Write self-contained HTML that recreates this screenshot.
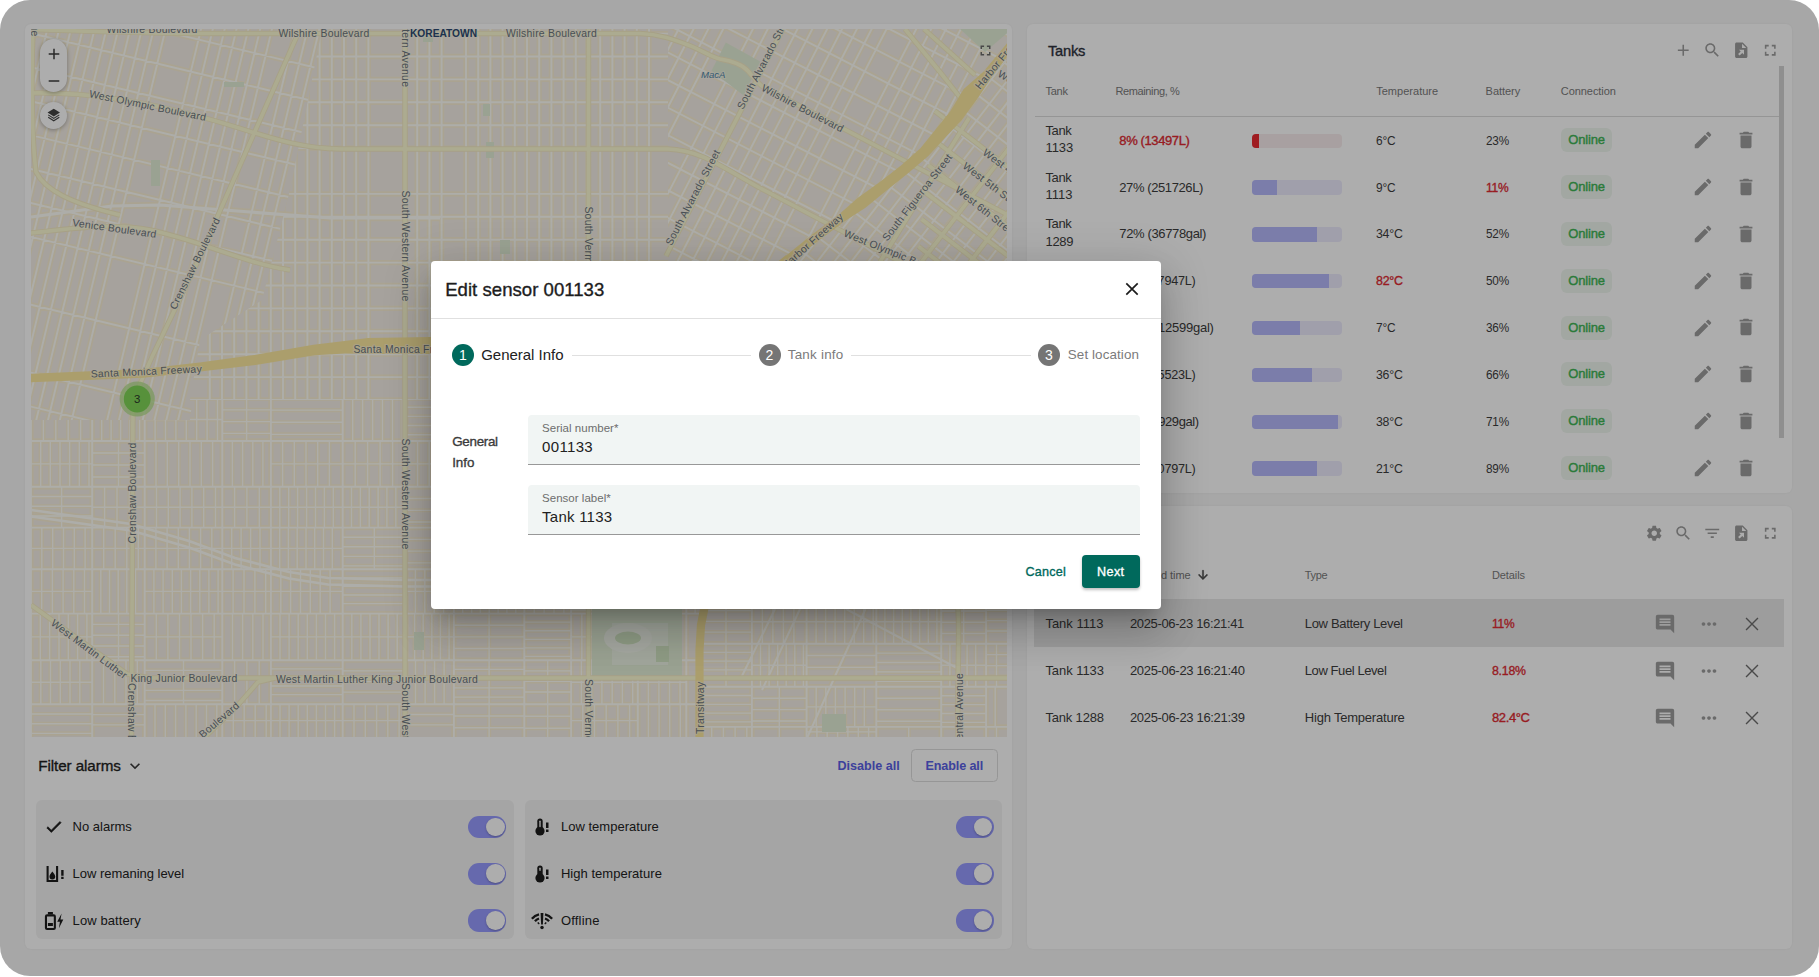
<!DOCTYPE html>
<html lang="en">
<head>
<meta charset="utf-8">
<title>Fuel level monitoring</title>
<style>

* { box-sizing: border-box; }
html, body { margin: 0; padding: 0; }
body {
  width: 1819px; height: 977px; overflow: hidden; background: #fff;
  font-family: "Liberation Sans", sans-serif; font-size: 13px; color: #212121;
  position: relative;
}
#frame {
  position: absolute; left: 0; top: 0; width: 1819px; height: 976px;
  border-radius: 30px; background: #f7f7f7; overflow: hidden;
}
.card {
  position: absolute; background: #fff; border-radius: 6px;
  box-shadow: 0 0 3px rgba(0,0,0,0.06);
}
#leftcard { position: absolute; left: 24.5px; top: 24px; width: 987.6px; height: 925px;
  background: #fff; border-radius: 6px; box-shadow: 0 0 3px rgba(0,0,0,0.06); }
#map { position: absolute; left: 6.5px; top: 5px; width: 976px; height: 708px; overflow: hidden; background: #f7ede1; }
#map svg { display: block; }
#backdrop { position: absolute; left: 0; top: 0; width: 1819px; height: 976px; background: rgba(0,0,0,0.32); }

.abs { position: absolute; white-space: nowrap; }
.med { -webkit-text-stroke: 0.35px currentColor; }
svg.ic { position: absolute; display: block; }

/* map controls */
.zoompill { position: absolute; left: 9px; top: 9.5px; width: 26.5px; height: 53.5px; border-radius: 14px; background: #fff;
  box-shadow: 0 1px 4px rgba(0,0,0,0.3); }
.layersbtn { position: absolute; left: 9px; top: 72.5px; width: 27px; height: 27px; border-radius: 50%; background: #fff;
  box-shadow: 0 1px 4px rgba(0,0,0,0.3); }

/* filter panel */
.fbox { position: absolute; top: 776px; height: 139px; background: #f4f4f4; border-radius: 6px; }
.frow { position: absolute; left: 0; right: 0; height: 46.8px; }
.frow .lbl { position: absolute; left: 36.3px; top: 50%; margin-top: -1px; transform: translateY(-50%); font-size: 13px; color: #222; white-space: nowrap; }
.toggle { position: absolute; right: 7.6px; top: 50%; margin-top: -11.1px; width: 38.2px; height: 22.2px; border-radius: 11.1px; background: #979bff; }
.toggle i { position: absolute; right: 1.8px; top: 1.8px; width: 18.6px; height: 18.6px; border-radius: 50%; background: #fff; box-shadow: 0 1px 2px rgba(0,0,0,0.25); }

/* tables */
.th { position: absolute; font-size: 11px; color: #7a7a7a; white-space: nowrap; }
.td { position: absolute; font-size: 13px; color: #3d3d3d; white-space: nowrap; transform: translateY(-50%); margin-top: -0.5px; }
.red { color: #e02a32 !important; }
.bar { position: absolute; width: 90px; height: 14.4px; border-radius: 4px; overflow: hidden; background: #ecebfd; }
.bar i { position: absolute; left: 0; top: 0; bottom: 0; background: #b5b8fb; }
.bar.r { background: #f8eced; }
.bar.r i { background: #ea2a31; }
.badge { position: absolute; width: 50.8px; height: 24px; border-radius: 6px; background: #eff7ef; color: #3fb556; font-size: 13px; -webkit-text-stroke: 0.4px currentColor;
  text-align: center; line-height: 24px; }

/* modal */
#modal { position: absolute; left: 430.5px; top: 260.5px; width: 730.7px; height: 348.9px; background: #fff; border-radius: 4px;
  box-shadow: 0 11px 15px -7px rgba(0,0,0,0.2), 0 24px 38px 3px rgba(0,0,0,0.14), 0 9px 46px 8px rgba(0,0,0,0.12); }
.field { position: absolute; left: 97.5px; width: 611.5px; height: 49.6px; background: #f1f5f4; border-radius: 4px 4px 0 0; border-bottom: 1.2px solid #989898; }
.field .fl { position: absolute; left: 14px; top: 7px; font-size: 11.5px; color: #6d6d6d; white-space: nowrap; letter-spacing: 0.1px; }
.field .fv { position: absolute; left: 14px; top: 23px; font-size: 15px; color: #212121; white-space: nowrap; }
.stepc { position: absolute; width: 22px; height: 22px; border-radius: 50%; color: #fff; font-size: 14px; text-align: center; line-height: 22px; }
.stepl { position: absolute; height: 1px; background: #e0e0e0; }

</style>
</head>
<body>
<div id="frame">
  <div id="leftcard">
    <div id="map">
<svg width="976" height="708" viewBox="31 29 976 708" font-family="Liberation Sans, sans-serif">
<defs>
<clipPath id="cA"><path d="M31 29H322L306 110L290 190L262 300L200 340L190 420L31 420Z"/></clipPath>
<clipPath id="cB"><path d="M322 29H668V400H190L200 340L262 300L290 190L306 110Z"/></clipPath>
<clipPath id="cC"><path d="M31 420H190V400H700V737H31Z"/></clipPath>
<clipPath id="cD"><path d="M668 29H1007V60L962 103L929 142L865 197L824 225L760 290H668Z"/></clipPath>
<clipPath id="cE"><path d="M1007 60L962 103L929 142L865 197L824 225L760 290H1007Z"/></clipPath>
<clipPath id="cF"><path d="M700 345H1007V737H700Z"/></clipPath>
</defs>
<rect x="31" y="29" width="976" height="708" fill="#f5efe7"/>
<defs>
<path id="gcA" clip-path="url(#cA)" d="M-340.6 511.7L-144.5 -305M-329.4 514.4L-133.3 -302.4M-318.2 517.1L-122.1 -299.7M-307.1 519.8L-111 -297M-295.9 522.5L-99.8 -294.3M-284.7 525.2L-88.6 -291.6M-273.5 527.9L-77.4 -288.9M-262.3 530.5L-66.2 -286.2M-240 535.9L-43.9 -280.9M-228.8 538.6L-32.7 -278.2M-217.6 541.3L-21.5 -275.5M-206.4 544L-10.3 -272.8M-184.1 549.3L12 -267.5M-172.9 552L23.2 -264.8M-161.7 554.7L34.4 -262.1M-150.5 557.4L45.6 -259.4M-139.3 560.1L56.8 -256.7M-128.1 562.8L67.9 -254M-117 565.4L79.1 -251.3M-105.8 568.1L90.3 -248.7M-94.6 570.8L101.5 -246M-83.4 573.5L112.7 -243.3M-72.2 576.2L123.9 -240.6M-61.1 578.9L135 -237.9M-49.9 581.5L146.2 -235.2M-38.7 584.2L157.4 -232.6M-27.5 586.9L168.6 -229.9M-16.3 589.6L179.8 -227.2M-5.1 592.3L191 -224.5M6 595L202.1 -221.8M17.2 597.7L213.3 -219.1M28.4 600.3L224.5 -216.4M62 608.4L258 -208.4M73.1 611.1L269.2 -205.7M84.3 613.8L280.4 -203M95.5 616.4L291.6 -200.3M106.7 619.1L302.8 -197.7M117.9 621.8L314 -195M129 624.5L325.1 -192.3M151.4 629.9L347.5 -186.9M162.6 632.6L358.7 -184.2M173.8 635.2L369.9 -181.5M185 637.9L381.1 -178.9M196.1 640.6L392.2 -176.2M207.3 643.3L403.4 -173.5M218.5 646L414.6 -170.8M229.7 648.7L425.8 -168.1M240.9 651.3L437 -165.4M252.1 654L448.1 -162.8M263.2 656.7L459.3 -160.1M274.4 659.4L470.5 -157.4M285.6 662.1L481.7 -154.7M296.8 664.8L492.9 -152M330.3 672.8L526.4 -144M341.5 675.5L537.6 -141.3M352.7 678.2L548.8 -138.6M363.9 680.9L560 -135.9M375.1 683.6L571.2 -133.2M386.2 686.2L582.3 -130.5M397.4 688.9L593.5 -127.9M408.6 691.6L604.7 -125.2M419.8 694.3L615.9 -122.5M431 697L627.1 -119.8M442.1 699.7L638.2 -117.1M453.3 702.4L649.4 -114.4M464.5 705L660.6 -111.7M475.7 707.7L671.8 -109.1M-348.5 519.1L468.2 715.2M-340.8 487L476 683.1M-325.4 422.8L491.4 618.9M-317.7 390.7L499.1 586.8M-310 358.7L506.8 554.8M-302.3 326.6L514.5 522.7M-294.6 294.5L522.2 490.6M-279.2 230.3L537.6 426.4M-263.8 166.1L553 362.2M-256.1 134L560.7 330.1M-248.4 102L568.4 298M-240.7 69.9L576.1 266M-233 37.8L583.8 233.9M-225.3 5.7L591.5 201.8M-217.6 -26.4L599.2 169.7M-209.9 -58.5L606.9 137.6M-202.2 -90.6L614.6 105.5M-194.5 -122.7L622.3 73.4M-186.8 -154.8L630 41.3M-179.1 -186.8L637.7 9.3M-171.4 -218.9L645.4 -22.8M-163.7 -251L653.1 -54.9M-156 -283.1L660.8 -87M-148.2 -315.2L668.5 -119.1"/>
<path id="gcB" clip-path="url(#cB)" d="M-22 476.5L-22 -363.5M-9.8 476.5L-9.8 -363.5M2.4 476.5L2.4 -363.5M14.6 476.5L14.6 -363.5M26.8 476.5L26.8 -363.5M51.2 476.5L51.2 -363.5M75.6 476.5L75.6 -363.5M87.8 476.5L87.8 -363.5M100 476.5L100 -363.5M112.2 476.5L112.2 -363.5M124.4 476.5L124.4 -363.5M136.6 476.5L136.6 -363.5M148.8 476.5L148.8 -363.5M161 476.5L161 -363.5M173.2 476.5L173.2 -363.5M185.4 476.5L185.4 -363.5M209.8 476.5L209.8 -363.5M222 476.5L222 -363.5M234.2 476.5L234.2 -363.5M246.4 476.5L246.4 -363.5M258.6 476.5L258.6 -363.5M270.8 476.5L270.8 -363.5M283 476.5L283 -363.5M295.2 476.5L295.2 -363.5M307.4 476.5L307.4 -363.5M319.6 476.5L319.6 -363.5M331.8 476.5L331.8 -363.5M344 476.5L344 -363.5M356.2 476.5L356.2 -363.5M368.4 476.5L368.4 -363.5M405 476.5L405 -363.5M417.2 476.5L417.2 -363.5M429.4 476.5L429.4 -363.5M441.6 476.5L441.6 -363.5M466 476.5L466 -363.5M478.2 476.5L478.2 -363.5M490.4 476.5L490.4 -363.5M502.6 476.5L502.6 -363.5M514.8 476.5L514.8 -363.5M527 476.5L527 -363.5M539.2 476.5L539.2 -363.5M551.4 476.5L551.4 -363.5M563.6 476.5L563.6 -363.5M575.8 476.5L575.8 -363.5M588 476.5L588 -363.5M600.2 476.5L600.2 -363.5M612.4 476.5L612.4 -363.5M624.6 476.5L624.6 -363.5M636.8 476.5L636.8 -363.5M649 476.5L649 -363.5M673.4 476.5L673.4 -363.5M685.6 476.5L685.6 -363.5M697.8 476.5L697.8 -363.5M710 476.5L710 -363.5M722.2 476.5L722.2 -363.5M734.4 476.5L734.4 -363.5M746.6 476.5L746.6 -363.5M758.8 476.5L758.8 -363.5M771 476.5L771 -363.5M783.2 476.5L783.2 -363.5M807.6 476.5L807.6 -363.5M819.8 476.5L819.8 -363.5M832 476.5L832 -363.5M-15 491.6L825 491.6M-15 468.7L825 468.7M-15 422.9L825 422.9M-15 400L825 400M-15 377.1L825 377.1M-15 354.2L825 354.2M-15 331.3L825 331.3M-15 308.4L825 308.4M-15 285.5L825 285.5M-15 262.6L825 262.6M-15 239.7L825 239.7M-15 216.8L825 216.8M-15 193.9L825 193.9M-15 148.1L825 148.1M-15 125.2L825 125.2M-15 102.3L825 102.3M-15 79.4L825 79.4M-15 56.5L825 56.5M-15 33.6L825 33.6M-15 10.7L825 10.7M-15 -35.1L825 -35.1M-15 -58L825 -58M-15 -80.9L825 -80.9M-15 -103.8L825 -103.8M-15 -126.7L825 -126.7M-15 -149.6L825 -149.6M-15 -172.5L825 -172.5M-15 -195.4L825 -195.4M-15 -218.3L825 -218.3M-15 -241.2L825 -241.2M-15 -264.1L825 -264.1M-15 -287L825 -287M-15 -309.9L825 -309.9M-15 -332.8L825 -332.8M-15 -355.7L825 -355.7M-15 -378.6L825 -378.6"/>
<path id="gcC" clip-path="url(#cC)" d="M31 398L31 737M92.2 398L92.2 737M144.7 398L144.7 737M222.3 398L222.3 737M270.9 398L270.9 737M342.7 398L342.7 737M406 398L406 737M453.9 398L453.9 737M524.3 398L524.3 737M571.1 398L571.1 737M637.8 398L637.8 737M686.3 398L686.3 737M735.8 398L735.8 737M31 398L700 398M31 441L700 441M31 486.8L700 486.8M31 527.6L700 527.6M31 569.2L700 569.2M31 613.6L700 613.6M31 660.2L700 660.2M31 704.3L700 704.3M31 747L700 747"/>
<path id="gcCi" clip-path="url(#cC)" d="M43.4 398L43.4 441M55.8 398L55.8 441M68.2 398L68.2 441M80.6 398L80.6 441M40.7 441L40.7 486.8M50.3 441L50.3 486.8M60 441L60 486.8M69.6 441L69.6 486.8M79.3 441L79.3 486.8M89 441L89 486.8M31 463.9L92.2 463.9M31 496.5L92.2 496.5M31 506.2L92.2 506.2M31 516L92.2 516M61.6 486.8L61.6 527.6M41.8 527.6L41.8 569.2M52.7 527.6L52.7 569.2M63.5 527.6L63.5 569.2M74.3 527.6L74.3 569.2M85.1 527.6L85.1 569.2M31 548.4L92.2 548.4M41.7 569.2L41.7 613.6M52.4 569.2L52.4 613.6M63.1 569.2L63.1 613.6M73.8 569.2L73.8 613.6M84.5 569.2L84.5 613.6M31 591.4L92.2 591.4M40.3 613.6L40.3 660.2M49.6 613.6L49.6 660.2M59 613.6L59 660.2M68.3 613.6L68.3 660.2M77.6 613.6L77.6 660.2M86.9 613.6L86.9 660.2M31 636.9L92.2 636.9M40.8 660.2L40.8 704.3M50.5 660.2L50.5 704.3M60.3 660.2L60.3 704.3M70 660.2L70 704.3M79.8 660.2L79.8 704.3M31 682.2L92.2 682.2M31 714L92.2 714M31 723.7L92.2 723.7M31 733.4L92.2 733.4M101.7 398L101.7 441M111.1 398L111.1 441M120.6 398L120.6 441M130.1 398L130.1 441M139.6 398L139.6 441M92.2 453L144.7 453M92.2 465L144.7 465M92.2 477L144.7 477M118.5 441L118.5 486.8M104.6 486.8L104.6 527.6M117 486.8L117 527.6M129.5 486.8L129.5 527.6M92.2 507.2L144.7 507.2M103.7 527.6L103.7 569.2M115.2 527.6L115.2 569.2M126.8 527.6L126.8 569.2M138.3 527.6L138.3 569.2M92.2 548.4L144.7 548.4M100.8 569.2L100.8 613.6M109.5 569.2L109.5 613.6M118.2 569.2L118.2 613.6M126.8 569.2L126.8 613.6M135.5 569.2L135.5 613.6M92.2 624.4L144.7 624.4M92.2 635.2L144.7 635.2M92.2 646L144.7 646M92.2 656.7L144.7 656.7M118.5 613.6L118.5 660.2M103.5 660.2L103.5 704.3M114.8 660.2L114.8 704.3M126 660.2L126 704.3M137.3 660.2L137.3 704.3M92.2 714.6L144.7 714.6M92.2 724.9L144.7 724.9M155.1 398L155.1 441M165.5 398L165.5 441M175.9 398L175.9 441M186.3 398L186.3 441M196.7 398L196.7 441M207.1 398L207.1 441M217.5 398L217.5 441M144.7 419.5L222.3 419.5M156 441L156 486.8M167.3 441L167.3 486.8M178.7 441L178.7 486.8M190 441L190 486.8M201.3 441L201.3 486.8M212.6 441L212.6 486.8M156.5 486.8L156.5 527.6M168.3 486.8L168.3 527.6M180.1 486.8L180.1 527.6M191.9 486.8L191.9 527.6M203.7 486.8L203.7 527.6M215.5 486.8L215.5 527.6M144.7 507.2L222.3 507.2M155.9 527.6L155.9 569.2M167.1 527.6L167.1 569.2M178.3 527.6L178.3 569.2M189.4 527.6L189.4 569.2M200.6 527.6L200.6 569.2M211.8 527.6L211.8 569.2M144.7 548.4L222.3 548.4M153.9 569.2L153.9 613.6M163.1 569.2L163.1 613.6M172.3 569.2L172.3 613.6M181.4 569.2L181.4 613.6M190.6 569.2L190.6 613.6M199.8 569.2L199.8 613.6M208.9 569.2L208.9 613.6M218.1 569.2L218.1 613.6M144.7 591.4L222.3 591.4M156.3 613.6L156.3 660.2M167.9 613.6L167.9 660.2M179.5 613.6L179.5 660.2M191 613.6L191 660.2M202.6 613.6L202.6 660.2M214.2 613.6L214.2 660.2M144.7 636.9L222.3 636.9M144.7 670.3L222.3 670.3M144.7 680.3L222.3 680.3M144.7 690.4L222.3 690.4M144.7 700.5L222.3 700.5M183.5 660.2L183.5 704.3M155 704.3L155 737M165.3 704.3L165.3 737M175.6 704.3L175.6 737M185.9 704.3L185.9 737M196.2 704.3L196.2 737M206.5 704.3L206.5 737M216.8 704.3L216.8 737M222.3 409.8L270.9 409.8M222.3 421.6L270.9 421.6M222.3 433.3L270.9 433.3M246.6 398L246.6 441M232.4 441L232.4 486.8M242.6 441L242.6 486.8M252.8 441L252.8 486.8M262.9 441L262.9 486.8M234.6 486.8L234.6 527.6M246.9 486.8L246.9 527.6M259.3 486.8L259.3 527.6M222.3 507.2L270.9 507.2M231.7 527.6L231.7 569.2M241.1 527.6L241.1 569.2M250.6 527.6L250.6 569.2M260 527.6L260 569.2M222.3 548.4L270.9 548.4M233.1 569.2L233.1 613.6M244 569.2L244 613.6M254.9 569.2L254.9 613.6M265.7 569.2L265.7 613.6M222.3 591.4L270.9 591.4M232.5 613.6L232.5 660.2M242.6 613.6L242.6 660.2M252.8 613.6L252.8 660.2M263 613.6L263 660.2M234.6 660.2L234.6 704.3M246.9 660.2L246.9 704.3M259.2 660.2L259.2 704.3M233.3 704.3L233.3 737M244.2 704.3L244.2 737M255.2 704.3L255.2 737M266.2 704.3L266.2 737M222.3 720.6L270.9 720.6M270.9 410.1L342.7 410.1M270.9 422.2L342.7 422.2M270.9 434.3L342.7 434.3M282.6 441L282.6 486.8M294.3 441L294.3 486.8M306 441L306 486.8M317.7 441L317.7 486.8M329.4 441L329.4 486.8M270.9 463.9L342.7 463.9M279.8 486.8L279.8 527.6M288.7 486.8L288.7 527.6M297.6 486.8L297.6 527.6M306.6 486.8L306.6 527.6M315.5 486.8L315.5 527.6M324.4 486.8L324.4 527.6M333.3 486.8L333.3 527.6M270.9 507.2L342.7 507.2M279.7 527.6L279.7 569.2M288.4 527.6L288.4 569.2M297.2 527.6L297.2 569.2M306 527.6L306 569.2M314.7 527.6L314.7 569.2M323.5 527.6L323.5 569.2M332.3 527.6L332.3 569.2M270.9 548.4L342.7 548.4M280.8 569.2L280.8 613.6M290.6 569.2L290.6 613.6M300.5 569.2L300.5 613.6M310.3 569.2L310.3 613.6M320.2 569.2L320.2 613.6M330.1 569.2L330.1 613.6M270.9 591.4L342.7 591.4M280 613.6L280 660.2M289.1 613.6L289.1 660.2M298.2 613.6L298.2 660.2M307.3 613.6L307.3 660.2M316.4 613.6L316.4 660.2M325.5 613.6L325.5 660.2M334.6 613.6L334.6 660.2M270.9 636.9L342.7 636.9M270.9 668.8L342.7 668.8M270.9 677.4L342.7 677.4M270.9 686L342.7 686M270.9 694.6L342.7 694.6M280 704.3L280 737M289.1 704.3L289.1 737M298.2 704.3L298.2 737M307.3 704.3L307.3 737M316.4 704.3L316.4 737M325.5 704.3L325.5 737M334.6 704.3L334.6 737M270.9 720.6L342.7 720.6M352.7 398L352.7 441M362.6 398L362.6 441M372.6 398L372.6 441M382.5 398L382.5 441M392.5 398L392.5 441M402.4 398L402.4 441M355.2 441L355.2 486.8M367.6 441L367.6 486.8M380.1 441L380.1 486.8M392.6 441L392.6 486.8M342.7 463.9L406 463.9M351.5 486.8L351.5 527.6M360.4 486.8L360.4 527.6M369.2 486.8L369.2 527.6M378.1 486.8L378.1 527.6M386.9 486.8L386.9 527.6M395.8 486.8L395.8 527.6M342.7 507.2L406 507.2M342.7 537.2L406 537.2M342.7 546.7L406 546.7M342.7 556.3L406 556.3M342.7 565.9L406 565.9M374.3 527.6L374.3 569.2M342.7 577.8L406 577.8M342.7 586.4L406 586.4M342.7 595L406 595M342.7 603.6L406 603.6M351.8 613.6L351.8 660.2M360.9 613.6L360.9 660.2M370 613.6L370 660.2M379 613.6L379 660.2M388.1 613.6L388.1 660.2M397.2 613.6L397.2 660.2M342.7 636.9L406 636.9M342.7 670.8L406 670.8M342.7 681.4L406 681.4M342.7 692.1L406 692.1M354 704.3L354 737M365.3 704.3L365.3 737M376.6 704.3L376.6 737M387.8 704.3L387.8 737M399.1 704.3L399.1 737M342.7 720.6L406 720.6M406 407.2L453.9 407.2M406 416.3L453.9 416.3M406 425.5L453.9 425.5M406 434.7L453.9 434.7M417.6 441L417.6 486.8M429.2 441L429.2 486.8M440.8 441L440.8 486.8M406 463.9L453.9 463.9M406 498.5L453.9 498.5M406 510.3L453.9 510.3M406 522L453.9 522M406 539.4L453.9 539.4M406 551.1L453.9 551.1M406 562.8L453.9 562.8M415.4 569.2L415.4 613.6M424.8 569.2L424.8 613.6M434.2 569.2L434.2 613.6M443.6 569.2L443.6 613.6M406 591.4L453.9 591.4M414.6 613.6L414.6 660.2M423.2 613.6L423.2 660.2M431.8 613.6L431.8 660.2M440.4 613.6L440.4 660.2M449.1 613.6L449.1 660.2M406 636.9L453.9 636.9M415.5 660.2L415.5 704.3M425.1 660.2L425.1 704.3M434.6 660.2L434.6 704.3M444.1 660.2L444.1 704.3M406 714.5L453.9 714.5M406 724.8L453.9 724.8M466.2 398L466.2 441M478.5 398L478.5 441M490.8 398L490.8 441M503.2 398L503.2 441M515.5 398L515.5 441M453.9 419.5L524.3 419.5M463.3 441L463.3 486.8M472.7 441L472.7 486.8M482.1 441L482.1 486.8M491.5 441L491.5 486.8M500.9 441L500.9 486.8M510.3 441L510.3 486.8M519.7 441L519.7 486.8M453.9 463.9L524.3 463.9M453.9 497.8L524.3 497.8M453.9 508.8L524.3 508.8M453.9 519.7L524.3 519.7M464.3 527.6L464.3 569.2M474.7 527.6L474.7 569.2M485.1 527.6L485.1 569.2M495.6 527.6L495.6 569.2M506 527.6L506 569.2M516.4 527.6L516.4 569.2M462.7 569.2L462.7 613.6M471.6 569.2L471.6 613.6M480.4 569.2L480.4 613.6M489.2 569.2L489.2 613.6M498.1 569.2L498.1 613.6M506.9 569.2L506.9 613.6M515.8 569.2L515.8 613.6M453.9 625.2L524.3 625.2M453.9 636.8L524.3 636.8M453.9 648.5L524.3 648.5M489.1 613.6L489.1 660.2M453.9 669.4L524.3 669.4M453.9 678.6L524.3 678.6M453.9 687.9L524.3 687.9M453.9 697.1L524.3 697.1M489.1 660.2L489.1 704.3M453.9 716L524.3 716M453.9 727.7L524.3 727.7M489.1 704.3L489.1 737M524.3 408.1L571.1 408.1M524.3 418.2L571.1 418.2M524.3 428.3L571.1 428.3M533.4 441L533.4 486.8M542.6 441L542.6 486.8M551.8 441L551.8 486.8M561 441L561 486.8M524.3 463.9L571.1 463.9M524.3 498.9L571.1 498.9M524.3 511L571.1 511M524.3 523.1L571.1 523.1M547.7 486.8L547.7 527.6M524.3 539.4L571.1 539.4M524.3 551.2L571.1 551.2M524.3 563L571.1 563M534.2 569.2L534.2 613.6M544.1 569.2L544.1 613.6M554 569.2L554 613.6M563.9 569.2L563.9 613.6M524.3 591.4L571.1 591.4M524.3 622.1L571.1 622.1M524.3 630.7L571.1 630.7M524.3 639.3L571.1 639.3M524.3 647.8L571.1 647.8M524.3 656.4L571.1 656.4M524.3 670.8L571.1 670.8M524.3 681.4L571.1 681.4M524.3 692L571.1 692M547.7 660.2L547.7 704.3M524.3 716.2L571.1 716.2M524.3 728.2L571.1 728.2M547.7 704.3L547.7 737M580.6 398L580.6 441M590.1 398L590.1 441M599.6 398L599.6 441M609.2 398L609.2 441M618.7 398L618.7 441M628.2 398L628.2 441M571.1 419.5L637.8 419.5M582 441L582 486.8M592.8 441L592.8 486.8M603.7 441L603.7 486.8M614.5 441L614.5 486.8M625.4 441L625.4 486.8M571.1 463.9L637.8 463.9M571.1 495.8L637.8 495.8M571.1 504.8L637.8 504.8M571.1 513.8L637.8 513.8M571.1 522.9L637.8 522.9M604.5 486.8L604.5 527.6M581.5 527.6L581.5 569.2M591.8 527.6L591.8 569.2M602.1 527.6L602.1 569.2M612.5 527.6L612.5 569.2M622.8 527.6L622.8 569.2M633.1 527.6L633.1 569.2M571.1 579.4L637.8 579.4M571.1 589.6L637.8 589.6M571.1 599.7L637.8 599.7M571.1 609.9L637.8 609.9M581.8 613.6L581.8 660.2M592.4 613.6L592.4 660.2M603 613.6L603 660.2M613.6 613.6L613.6 660.2M624.3 613.6L624.3 660.2M571.1 636.9L637.8 636.9M581.4 660.2L581.4 704.3M591.6 660.2L591.6 704.3M601.9 660.2L601.9 704.3M612.2 660.2L612.2 704.3M622.4 660.2L622.4 704.3M632.7 660.2L632.7 704.3M571.1 682.2L637.8 682.2M582.8 704.3L582.8 737M594.5 704.3L594.5 737M606.2 704.3L606.2 737M617.9 704.3L617.9 737M629.6 704.3L629.6 737M571.1 720.6L637.8 720.6M649.2 398L649.2 441M660.6 398L660.6 441M672 398L672 441M637.8 419.5L686.3 419.5M648.4 441L648.4 486.8M659 441L659 486.8M669.5 441L669.5 486.8M680.1 441L680.1 486.8M646.7 486.8L646.7 527.6M655.7 486.8L655.7 527.6M664.6 486.8L664.6 527.6M673.5 486.8L673.5 527.6M682.4 486.8L682.4 527.6M637.8 507.2L686.3 507.2M637.8 537.2L686.3 537.2M637.8 546.8L686.3 546.8M637.8 556.4L686.3 556.4M637.8 566.1L686.3 566.1M637.8 579.9L686.3 579.9M637.8 590.7L686.3 590.7M637.8 601.4L686.3 601.4M648.1 613.6L648.1 660.2M658.4 613.6L658.4 660.2M668.6 613.6L668.6 660.2M678.9 613.6L678.9 660.2M648.4 660.2L648.4 704.3M658.9 660.2L658.9 704.3M669.5 660.2L669.5 704.3M680 660.2L680 704.3M637.8 682.2L686.3 682.2M648.4 704.3L648.4 737M659.1 704.3L659.1 737M669.7 704.3L669.7 737M680.3 704.3L680.3 737M686.3 409.3L700 409.3M686.3 420.6L700 420.6M686.3 431.9L700 431.9M695.8 441L695.8 486.8M686.3 507.2L700 507.2M696.6 527.6L696.6 569.2M686.3 548.4L700 548.4M695.1 569.2L695.1 613.6"/>
<path id="gcD" clip-path="url(#cD)" d="M214.6 208.5L599.9 -538M226.3 214.5L611.6 -531.9M238.1 220.6L623.3 -525.8M249.8 226.6L635.1 -519.8M261.5 232.7L646.8 -513.7M273.3 238.8L658.5 -507.7M285 244.8L670.3 -501.6M296.7 250.9L682 -495.6M308.5 256.9L693.7 -489.5M320.2 263L705.4 -483.5M331.9 269L717.2 -477.4M367.1 287.2L752.4 -459.2M378.8 293.2L764.1 -453.2M390.6 299.3L775.8 -447.1M402.3 305.4L787.6 -441.1M414 311.4L799.3 -435M425.8 317.5L811 -429M437.5 323.5L822.7 -422.9M449.2 329.6L834.5 -416.9M460.9 335.6L846.2 -410.8M472.7 341.7L857.9 -404.8M496.1 353.8L881.4 -392.7M507.9 359.8L893.1 -386.6M519.6 365.9L904.9 -380.5M531.3 371.9L916.6 -374.5M543 378L928.3 -368.4M566.5 390.1L951.8 -356.3M578.2 396.2L963.5 -350.3M590 402.2L975.2 -344.2M601.7 408.3L987 -338.2M613.4 414.3L998.7 -332.1M625.2 420.4L1010.4 -326.1M636.9 426.4L1022.2 -320M648.6 432.5L1033.9 -313.9M660.3 438.5L1045.6 -307.9M672.1 444.6L1057.3 -301.8M695.5 456.7L1080.8 -289.7M707.3 462.8L1092.5 -283.7M719 468.8L1104.3 -277.6M730.7 474.9L1116 -271.6M742.5 480.9L1127.7 -265.5M754.2 487L1139.4 -259.5M777.6 499.1L1162.9 -247.4M789.4 505.1L1174.6 -241.3M801.1 511.2L1186.4 -235.2M848 535.4L1233.3 -211M859.8 541.5L1245 -205M871.5 547.5L1256.7 -198.9M883.2 553.6L1268.5 -192.9M894.9 559.6L1280.2 -186.8M906.7 565.7L1291.9 -180.8M918.4 571.7L1303.7 -174.7M930.1 577.8L1315.4 -168.6M941.9 583.8L1327.1 -162.6M953.6 589.9L1338.9 -156.5M965.3 596L1350.6 -150.5M207.1 228.2L953.6 613.5M229.6 184.7L976 570M240.8 162.9L987.3 548.2M252.1 141.2L998.5 526.4M263.3 119.4L1009.7 504.7M285.8 75.8L1032.2 461.1M297 54.1L1043.5 439.3M308.2 32.3L1054.7 417.6M319.5 10.5L1065.9 395.8M330.7 -11.2L1077.2 374M342 -33L1088.4 352.3M353.2 -54.8L1099.6 330.5M364.4 -76.5L1110.9 308.7M375.7 -98.3L1122.1 286.9M386.9 -120.1L1133.3 265.2M398.1 -141.9L1144.6 243.4M409.4 -163.6L1155.8 221.6M420.6 -185.4L1167.1 199.9M431.9 -207.2L1178.3 178.1M443.1 -228.9L1189.5 156.3M454.3 -250.7L1200.8 134.5M465.6 -272.5L1212 112.8M476.8 -294.3L1223.2 91M488 -316L1234.5 69.2M510.5 -359.6L1257 25.7M521.7 -381.3L1268.2 3.9M533 -403.1L1279.4 -17.8M566.7 -468.4L1313.1 -83.2M577.9 -490.2L1324.4 -104.9M589.2 -512L1335.6 -126.7M600.4 -533.7L1346.8 -148.5M611.6 -555.5L1358.1 -170.2"/>
<path id="gcE" clip-path="url(#cE)" d="M522 203L887.3 -273M532.7 211.2L898 -264.8M543.5 219.4L908.7 -256.6M554.2 227.6L919.4 -248.4M564.9 235.9L930.1 -240.2M575.6 244.1L940.8 -231.9M586.3 252.3L951.6 -223.7M597 260.5L962.3 -215.5M607.7 268.7L973 -207.3M618.4 277L983.7 -199.1M629.1 285.2L994.4 -190.8M639.8 293.4L1005.1 -182.6M650.6 301.6L1015.8 -174.4M661.3 309.8L1026.5 -166.2M672 318L1037.2 -158M682.7 326.3L1047.9 -149.8M693.4 334.5L1058.7 -141.5M704.1 342.7L1069.4 -133.3M714.8 350.9L1080.1 -125.1M725.5 359.1L1090.8 -116.9M736.2 367.4L1101.5 -108.7M747 375.6L1112.2 -100.4M757.7 383.8L1122.9 -92.2M768.4 392L1133.6 -84M779.1 400.2L1144.3 -75.8M789.8 408.4L1155 -67.6M800.5 416.7L1165.8 -59.4M811.2 424.9L1176.5 -51.1M821.9 433.1L1187.2 -42.9M832.6 441.3L1197.9 -34.7M843.3 449.5L1208.6 -26.5M854.1 457.8L1219.3 -18.3M864.8 466L1230 -10M875.5 474.2L1240.7 -1.8M886.2 482.4L1251.4 6.4M896.9 490.6L1262.2 14.6M907.6 498.8L1272.9 22.8M918.3 507.1L1283.6 31M939.7 523.5L1305 47.5M950.4 531.7L1315.7 55.7M961.2 539.9L1326.4 63.9M971.9 548.2L1337.1 72.1M982.6 556.4L1347.8 80.4M993.3 564.6L1358.5 88.6M1004 572.8L1369.3 96.8M1014.7 581L1380 105M521.2 221.3L997.2 586.5M534 204.6L1010 569.9M546.8 188L1022.8 553.2M559.6 171.3L1035.6 536.6M572.4 154.6L1048.4 519.9M585.2 138L1061.2 503.2M597.9 121.3L1074 486.6M610.7 104.7L1086.7 469.9M623.5 88L1099.5 453.3M636.3 71.3L1112.3 436.6M649.1 54.7L1125.1 419.9M661.9 38L1137.9 403.3M674.6 21.4L1150.7 386.6M687.4 4.7L1163.4 369.9M700.2 -12L1176.2 353.3M725.8 -45.3L1201.8 320M738.6 -61.9L1214.6 303.3M751.3 -78.6L1227.4 286.6M764.1 -95.3L1240.1 270M776.9 -111.9L1252.9 253.3M789.7 -128.6L1265.7 236.7M802.5 -145.3L1278.5 220M815.3 -161.9L1291.3 203.3M828 -178.6L1304.1 186.7M840.8 -195.2L1316.8 170M853.6 -211.9L1329.6 153.4M866.4 -228.6L1342.4 136.7M879.2 -245.2L1355.2 120M892 -261.9L1368 103.4M904.8 -278.5L1380.8 86.7"/>
<path id="gcF" clip-path="url(#cF)" d="M700 345L700 737M751.9 345L751.9 737M806.6 345L806.6 737M876.3 345L876.3 737M941.2 345L941.2 737M986.1 345L986.1 737M1039 345L1039 737M700 345L1007 345M700 388.6L1007 388.6M700 431L1007 431M700 472.4L1007 472.4M700 514.6L1007 514.6M700 559.6L1007 559.6M700 599.8L1007 599.8M700 643.7L1007 643.7M700 686.7L1007 686.7M700 726.9L1007 726.9M700 769.2L1007 769.2"/>
<path id="gcFi" clip-path="url(#cF)" d="M700 356L751.9 356M700 367L751.9 367M700 378L751.9 378M726 345L726 388.6M700 401L751.9 401M700 413.5L751.9 413.5M700 425.9L751.9 425.9M708.9 431L708.9 472.4M717.8 431L717.8 472.4M726.8 431L726.8 472.4M735.7 431L735.7 472.4M744.6 431L744.6 472.4M700 451.7L751.9 451.7M711.6 472.4L711.6 514.6M723.2 472.4L723.2 514.6M734.8 472.4L734.8 514.6M746.5 472.4L746.5 514.6M700 493.5L751.9 493.5M700 524.8L751.9 524.8M700 535L751.9 535M700 545.1L751.9 545.1M700 555.3L751.9 555.3M709.5 559.6L709.5 599.8M719.1 559.6L719.1 599.8M728.6 559.6L728.6 599.8M738.1 559.6L738.1 599.8M747.7 559.6L747.7 599.8M700 610.6L751.9 610.6M700 621.3L751.9 621.3M700 632.1L751.9 632.1M726 599.8L726 643.7M700 652.4L751.9 652.4M700 661.1L751.9 661.1M700 669.8L751.9 669.8M700 678.6L751.9 678.6M726 643.7L726 686.7M700 695.5L751.9 695.5M700 704.3L751.9 704.3M700 713.1L751.9 713.1M700 721.9L751.9 721.9M711.7 726.9L711.7 737M723.4 726.9L723.4 737M735.1 726.9L735.1 737M746.8 726.9L746.8 737M751.9 353.8L806.6 353.8M751.9 362.5L806.6 362.5M751.9 371.3L806.6 371.3M751.9 380.1L806.6 380.1M779.3 345L779.3 388.6M751.9 398.5L806.6 398.5M751.9 408.3L806.6 408.3M751.9 418.2L806.6 418.2M761.5 431L761.5 472.4M771.1 431L771.1 472.4M780.7 431L780.7 472.4M790.2 431L790.2 472.4M799.8 431L799.8 472.4M761.4 472.4L761.4 514.6M770.9 472.4L770.9 514.6M780.3 472.4L780.3 514.6M789.8 472.4L789.8 514.6M799.2 472.4L799.2 514.6M751.9 493.5L806.6 493.5M760.6 514.6L760.6 559.6M769.4 514.6L769.4 559.6M778.1 514.6L778.1 559.6M786.8 514.6L786.8 559.6M795.5 514.6L795.5 559.6M751.9 537.1L806.6 537.1M751.9 569.4L806.6 569.4M751.9 579.1L806.6 579.1M751.9 588.8L806.6 588.8M779.3 559.6L779.3 599.8M762.4 599.8L762.4 643.7M772.9 599.8L772.9 643.7M783.4 599.8L783.4 643.7M793.9 599.8L793.9 643.7M751.9 621.7L806.6 621.7M760.5 643.7L760.5 686.7M769.1 643.7L769.1 686.7M777.7 643.7L777.7 686.7M786.2 643.7L786.2 686.7M794.8 643.7L794.8 686.7M803.4 643.7L803.4 686.7M751.9 665.2L806.6 665.2M751.9 698.2L806.6 698.2M751.9 709.6L806.6 709.6M751.9 721L806.6 721M779.3 686.7L779.3 726.9M779.3 726.9L779.3 737M806.6 356.8L876.3 356.8M806.6 368.6L876.3 368.6M806.6 380.3L876.3 380.3M841.4 345L841.4 388.6M806.6 400.4L876.3 400.4M806.6 412.3L876.3 412.3M806.6 424.1L876.3 424.1M806.6 442.2L876.3 442.2M806.6 453.5L876.3 453.5M806.6 464.7L876.3 464.7M841.4 431L841.4 472.4M806.6 484.2L876.3 484.2M806.6 496L876.3 496M806.6 507.8L876.3 507.8M816.7 514.6L816.7 559.6M826.8 514.6L826.8 559.6M836.9 514.6L836.9 559.6M847 514.6L847 559.6M857.2 514.6L857.2 559.6M867.3 514.6L867.3 559.6M806.6 537.1L876.3 537.1M815.6 559.6L815.6 599.8M824.6 559.6L824.6 599.8M833.6 559.6L833.6 599.8M842.6 559.6L842.6 599.8M851.7 559.6L851.7 599.8M860.7 559.6L860.7 599.8M869.7 559.6L869.7 599.8M816.1 599.8L816.1 643.7M825.6 599.8L825.6 643.7M835.1 599.8L835.1 643.7M844.7 599.8L844.7 643.7M854.2 599.8L854.2 643.7M863.7 599.8L863.7 643.7M873.2 599.8L873.2 643.7M806.6 621.7L876.3 621.7M806.6 655.5L876.3 655.5M806.6 667.4L876.3 667.4M806.6 679.2L876.3 679.2M816.2 686.7L816.2 726.9M825.8 686.7L825.8 726.9M835.4 686.7L835.4 726.9M845.1 686.7L845.1 726.9M854.7 686.7L854.7 726.9M864.3 686.7L864.3 726.9M806.6 706.8L876.3 706.8M816.9 726.9L816.9 737M827.2 726.9L827.2 737M837.6 726.9L837.6 737M847.9 726.9L847.9 737M858.3 726.9L858.3 737M868.6 726.9L868.6 737M806.6 731.9L876.3 731.9M876.3 354.6L941.2 354.6M876.3 364.1L941.2 364.1M876.3 373.7L941.2 373.7M876.3 383.2L941.2 383.2M886.9 388.6L886.9 431M897.6 388.6L897.6 431M908.3 388.6L908.3 431M919 388.6L919 431M929.7 388.6L929.7 431M876.3 440.7L941.2 440.7M876.3 450.5L941.2 450.5M876.3 460.2L941.2 460.2M908.7 431L908.7 472.4M876.3 482.4L941.2 482.4M876.3 492.4L941.2 492.4M876.3 502.4L941.2 502.4M876.3 523.9L941.2 523.9M876.3 533.2L941.2 533.2M876.3 542.5L941.2 542.5M876.3 551.8L941.2 551.8M908.7 514.6L908.7 559.6M885.8 559.6L885.8 599.8M895.4 559.6L895.4 599.8M904.9 559.6L904.9 599.8M914.5 559.6L914.5 599.8M924 559.6L924 599.8M933.6 559.6L933.6 599.8M876.3 579.7L941.2 579.7M884.9 599.8L884.9 643.7M893.6 599.8L893.6 643.7M902.3 599.8L902.3 643.7M910.9 599.8L910.9 643.7M919.6 599.8L919.6 643.7M928.3 599.8L928.3 643.7M936.9 599.8L936.9 643.7M876.3 621.7L941.2 621.7M876.3 653.1L941.2 653.1M876.3 662.5L941.2 662.5M876.3 671.9L941.2 671.9M876.3 681.4L941.2 681.4M876.3 698.2L941.2 698.2M876.3 709.7L941.2 709.7M876.3 721.2L941.2 721.2M908.7 726.9L908.7 737M953.7 345L953.7 388.6M966.1 345L966.1 388.6M978.6 345L978.6 388.6M952.3 388.6L952.3 431M963.4 388.6L963.4 431M974.5 388.6L974.5 431M941.2 443.1L986.1 443.1M941.2 455.1L986.1 455.1M941.2 467.2L986.1 467.2M953 472.4L953 514.6M964.7 472.4L964.7 514.6M976.5 472.4L976.5 514.6M941.2 525.1L986.1 525.1M941.2 535.6L986.1 535.6M941.2 546.1L986.1 546.1M941.2 571.4L986.1 571.4M941.2 583.2L986.1 583.2M941.2 595.1L986.1 595.1M941.2 611L986.1 611M941.2 622.2L986.1 622.2M941.2 633.5L986.1 633.5M963.7 599.8L963.7 643.7M949.9 643.7L949.9 686.7M958.5 643.7L958.5 686.7M967.1 643.7L967.1 686.7M975.7 643.7L975.7 686.7M941.2 665.2L986.1 665.2M941.2 695.7L986.1 695.7M941.2 704.6L986.1 704.6M941.2 713.5L986.1 713.5M941.2 722.4L986.1 722.4M996.5 345L996.5 388.6M986.1 400.1L1007 400.1M986.1 411.6L1007 411.6M986.1 423.1L1007 423.1M997.2 431L997.2 472.4M995.6 472.4L995.6 514.6M986.1 493.5L1007 493.5M997.5 514.6L997.5 559.6M986.1 572L1007 572M986.1 584.4L1007 584.4M996.5 559.6L996.5 599.8M986.1 610.2L1007 610.2M986.1 620.6L1007 620.6M986.1 631L1007 631M986.1 654.6L1007 654.6M986.1 665.6L1007 665.6M986.1 676.6L1007 676.6M996.5 643.7L996.5 686.7M995.2 686.7L995.2 726.9M996.5 726.9L996.5 737"/>
<path id="x1" d="M865.5 609L807.5 737M846 609L957 668M775 609L740 680M800 609L762 690"/>
<path id="x2" d="M31 217L112 206L160 205L250 212L330 218H440"/>
<path id="x3" d="M31 510L131 524L189 541L235 558L289 572L328 578L405 580H700M31 516.5L131 530.5L189 547.5L235 564.5L289 578.5L328 584.5L405 586.5H700"/>
</defs>
<g fill="none" stroke="#fbf1d6">
<use href="#gcA" stroke-width="5.3"/>
<use href="#gcB" stroke-width="5.3"/>
<use href="#gcC" stroke-width="5.3"/>
<use href="#gcCi" stroke-width="4.07"/>
<use href="#gcD" stroke-width="5.3"/>
<use href="#gcE" stroke-width="5.3"/>
<use href="#gcF" stroke-width="5.3"/>
<use href="#gcFi" stroke-width="4.07"/>
<use href="#x1" stroke-width="5.4"/>
<use href="#x2" stroke-width="6.6"/>
<use href="#x3" stroke-width="6.0"/>
</g>
<g fill="none" stroke="#fffffa">
<use href="#gcA" stroke-width="1.9"/>
<use href="#gcB" stroke-width="1.9"/>
<use href="#gcC" stroke-width="1.9"/>
<use href="#gcCi" stroke-width="1.35"/>
<use href="#gcD" stroke-width="1.9"/>
<use href="#gcE" stroke-width="1.9"/>
<use href="#gcF" stroke-width="1.9"/>
<use href="#gcFi" stroke-width="1.35"/>
<use href="#x1" stroke-width="2.0"/>
<use href="#x2" stroke-width="3.2"/>
<use href="#x3" stroke-width="2.6"/>
</g>
<g fill="#e4efd8">
<path d="M725.8 42.5L760.2 61.5L743.7 95.5L711.5 70.8Z"/>
<path d="M592 609H682V676H592Z"/>
<path d="M1012 29H960L985 52Z"/>
<rect x="151" y="160" width="9" height="26"/><rect x="224" y="82" width="20" height="5"/>
<rect x="486" y="142" width="8" height="16"/><rect x="483" y="104" width="7" height="12"/>
<rect x="423" y="36" width="10" height="6"/><rect x="414" y="632" width="10" height="18"/>
<rect x="822" y="714" width="24" height="18"/><rect x="500" y="240" width="10" height="14"/>
</g>
<rect x="612" y="623" width="56" height="42" fill="#eef5e6"/><ellipse cx="628" cy="638" rx="24" ry="15" fill="#f4f8ee"/><ellipse cx="628" cy="638" rx="13" ry="6.5" fill="#d3e6c4" stroke="none"/><rect x="656" y="646" width="13" height="16" fill="#d3e6c4"/>
<g fill="none" stroke-linejoin="round">
<path d="M31 29.5C80 31 150 33.5 210 33.5H640C660 34 675 40 690 45.7C705 52 712 57 720 59C732 61 742 64 748 71C754 78 757 82 761.6 85.8L1007 214.5M31 93C80 92 140 100 205 118C260 133 290 148 340 149H668C700 150 720 166 760 188L1007 318M31 233C70 229 110 222 150 230C200 240 240 262 290 270M300 29L197 263L152 357L133 400L131.5 737M405 29V737M588.5 29V737M31 605L127 674L150 678H1007M958 609C960 640 957 660 958 737M238 705L205 737M238 705L258 682L275 678M783 29L666 256M969 118L880 262M924 29L975 75M905 29L940 72L962 100M934.8 111L1042.7 193.8M931.5 138.1L1035.4 217.8M928.3 165.2L1028.1 241.8M925 192.3L1020.8 265.8M921.7 219.3L1013.5 289.8M918.4 246.4L1006.2 313.8M903.3 285.5L1019 134.7M935.3 307.5L1051 156.7M33 29C31 80 32 140 36 172C45 190 70 203 120 215" stroke="#f6ecc6" stroke-width="5.4"/>
<path d="M31 29.5C80 31 150 33.5 210 33.5H640C660 34 675 40 690 45.7C705 52 712 57 720 59C732 61 742 64 748 71C754 78 757 82 761.6 85.8L1007 214.5M31 93C80 92 140 100 205 118C260 133 290 148 340 149H668C700 150 720 166 760 188L1007 318M31 233C70 229 110 222 150 230C200 240 240 262 290 270M300 29L197 263L152 357L133 400L131.5 737M405 29V737M588.5 29V737M31 605L127 674L150 678H1007M958 609C960 640 957 660 958 737M238 705L205 737M238 705L258 682L275 678M783 29L666 256M969 118L880 262M924 29L975 75M905 29L940 72L962 100M934.8 111L1042.7 193.8M931.5 138.1L1035.4 217.8M928.3 165.2L1028.1 241.8M925 192.3L1020.8 265.8M921.7 219.3L1013.5 289.8M918.4 246.4L1006.2 313.8M903.3 285.5L1019 134.7M935.3 307.5L1051 156.7M33 29C31 80 32 140 36 172C45 190 70 203 120 215" stroke="#fefdd4" stroke-width="3.6"/>
</g>
<g fill="#fde9a0" stroke="none">
<path d="M25.2 382.5L143.3 377.7L200.5 371.6L255.7 364.9L314.7 355.2L345.5 353.5L368.2 354L430 354L560.1 353L641.1 348.4L702.5 327.5L748.2 299.5L791.9 261.9L786.1 254.9L741.8 290.5L697.5 316.5L638.9 335.6L559.9 338L430 337L367.8 338L344.5 341.1L313.3 344.8L254.3 355.1L199.5 362.4L142.7 368.9L24.8 374.1Z"/>
<path d="M1008.7 41.3L1002.1 49.3L983.4 71.7L969.4 84.1L963.5 89.3L950.1 111.5L934.3 131.1L920.6 148.1L901.6 165L880.1 181.7L857.9 197.8L839.7 213.7L810.9 235.6L786.5 255.2L741.4 297.3L710.4 358.8L703.3 439.8L703.5 559.9L701.8 599.5L696.9 624.5L695.4 649.9L695.4 745L703.6 745L703.6 650.1L705.1 625.5L710.2 600.5L712.5 560.1L712.7 440.2L719.6 361.2L748.6 302.7L792.1 261.6L816.1 242.4L845.1 220.9L865.5 207.8L886.9 190.3L908.4 173L928.4 155.9L943.7 139.3L961.7 120.3L977.3 99.1L980.6 93.9L991.2 78.1L1008.7 54.7L1015.3 46.7Z"/>
</g>
<g stroke="#fbf6ea" stroke-width="2.2" stroke-opacity="0.55" paint-order="stroke" stroke-linejoin="round">
<text x="152" y="32.5" font-size="10.4" fill="#6b757d" letter-spacing="0.25" text-anchor="middle">Wilshire Boulevard</text>
<text x="324" y="37" font-size="10.4" fill="#6b757d" letter-spacing="0.25" text-anchor="middle">Wilshire Boulevard</text>
<text x="443.5" y="36.5" font-size="10.2" fill="#2b4a73" letter-spacing="0" text-anchor="middle" font-weight="bold">KOREATOWN</text>
<text x="551.5" y="37" font-size="10.4" fill="#6b757d" letter-spacing="0.25" text-anchor="middle">Wilshire Boulevard</text>
<text x="401.5" y="47.5" transform="rotate(90 401.5 47.5)" font-size="10.4" fill="#6b757d" letter-spacing="0.25" text-anchor="middle">Western Avenue</text>
<text x="30.5" y="36.5" transform="rotate(90 30.5 36.5)" font-size="10.4" fill="#6b757d" letter-spacing="0.25" text-anchor="end">South La Brea Avenue</text>
<text x="147" y="109" transform="rotate(11.7 147 109)" font-size="10.4" fill="#6b757d" letter-spacing="0.25" text-anchor="middle">West Olympic Boulevard</text>
<text x="114" y="232" transform="rotate(8 114 232)" font-size="10.4" fill="#6b757d" letter-spacing="0.25" text-anchor="middle">Venice Boulevard</text>
<text x="198" y="265" transform="rotate(-63.7 198 265)" font-size="10.4" fill="#6b757d" letter-spacing="0.25" text-anchor="middle">Crenshaw Boulevard</text>
<text x="401.5" y="246" transform="rotate(90 401.5 246)" font-size="10.4" fill="#6b757d" letter-spacing="0.25" text-anchor="middle">South Western Avenue</text>
<text x="401.5" y="494" transform="rotate(90 401.5 494)" font-size="10.4" fill="#6b757d" letter-spacing="0.25" text-anchor="middle">South Western Avenue</text>
<text x="585" y="262" transform="rotate(90 585 262)" font-size="10.4" fill="#6b757d" letter-spacing="0.25" text-anchor="middle">South Vermont Avenue</text>
<text x="146.5" y="375" transform="rotate(-2.6 146.5 375)" font-size="10.4" fill="#6b757d" letter-spacing="0.25" text-anchor="middle">Santa Monica Freeway</text>
<text x="353.4" y="353.3" font-size="10.4" fill="#6b757d" letter-spacing="0.25" text-anchor="start">Santa Monica Freeway</text>
<text x="135.5" y="493" transform="rotate(-90 135.5 493)" font-size="10.4" fill="#6b757d" letter-spacing="0.25" text-anchor="middle">Crenshaw Boulevard</text>
<text x="87" y="652" transform="rotate(36.8 87 652)" font-size="10.4" fill="#6b757d" letter-spacing="0.25" text-anchor="middle">West Martin Luther</text>
<text x="184" y="682" font-size="10.4" fill="#6b757d" letter-spacing="0.25" text-anchor="middle">King Junior Boulevard</text>
<text x="377" y="682.5" font-size="10.4" fill="#6b757d" letter-spacing="0.25" text-anchor="middle">West Martin Luther King Junior Boulevard</text>
<text x="127.5" y="683" transform="rotate(90 127.5 683)" font-size="10.4" fill="#6b757d" letter-spacing="0.25" text-anchor="start">Crenshaw Boulevard</text>
<text x="221.5" y="722.5" transform="rotate(-40.5 221.5 722.5)" font-size="10.4" fill="#6b757d" letter-spacing="0.25" text-anchor="middle">Boulevard</text>
<text x="401.5" y="683" transform="rotate(90 401.5 683)" font-size="10.4" fill="#6b757d" letter-spacing="0.25" text-anchor="start">South Western Avenue</text>
<text x="585" y="679" transform="rotate(90 585 679)" font-size="10.4" fill="#6b757d" letter-spacing="0.25" text-anchor="start">South Vermont Avenue</text>
<text x="703.5" y="734" transform="rotate(-90 703.5 734)" font-size="10.4" fill="#6b757d" letter-spacing="0.25" text-anchor="start">Transitway</text>
<text x="962.5" y="673" transform="rotate(-90 962.5 673)" font-size="10.4" fill="#6b757d" letter-spacing="0.25" text-anchor="end">South Central Avenue</text>
<text x="701" y="77.5" font-size="9.6" fill="#4d86a8" letter-spacing="0" text-anchor="start" font-style="italic">MacA</text>
<text x="743" y="110" transform="rotate(-62.7 743 110)" font-size="10.4" fill="#6b757d" letter-spacing="0.25" text-anchor="start">South Alvarado Street</text>
<text x="696" y="199" transform="rotate(-62.5 696 199)" font-size="10.4" fill="#6b757d" letter-spacing="0.25" text-anchor="middle">South Alvarado Street</text>
<text x="801" y="111.5" transform="rotate(27.7 801 111.5)" font-size="10.4" fill="#6b757d" letter-spacing="0.25" text-anchor="middle">Wilshire Boulevard</text>
<text x="980" y="90" transform="rotate(-50.7 980 90)" font-size="10.4" fill="#6b757d" letter-spacing="0.25" text-anchor="start">Harbor Freeway</text>
<text x="997" y="76" transform="rotate(30 997 76)" font-size="10.4" fill="#6b757d" letter-spacing="0.25" text-anchor="start">West 3rd Street</text>
<text x="982" y="154" transform="rotate(37 982 154)" font-size="10.4" fill="#6b757d" letter-spacing="0.25" text-anchor="start">West 4th Street</text>
<text x="962" y="167.5" transform="rotate(37 962 167.5)" font-size="10.4" fill="#6b757d" letter-spacing="0.25" text-anchor="start">West 5th Street</text>
<text x="954.5" y="191" transform="rotate(38.5 954.5 191)" font-size="10.4" fill="#6b757d" letter-spacing="0.25" text-anchor="start">West 6th Street</text>
<text x="920" y="199.5" transform="rotate(-52.2 920 199.5)" font-size="10.4" fill="#6b757d" letter-spacing="0.25" text-anchor="middle">South Figueroa Street</text>
<text x="844" y="217.5" transform="rotate(-41.8 844 217.5)" font-size="10.4" fill="#6b757d" letter-spacing="0.25" text-anchor="end">Harbor Freeway</text>
<text x="843" y="236" transform="rotate(22 843 236)" font-size="10.4" fill="#6b757d" letter-spacing="0.25" text-anchor="start">West Olympic Boulevard</text>
</g>
<circle cx="137.2" cy="399" r="17.6" fill="#b5e28c" fill-opacity="0.75"/>
<circle cx="137.2" cy="399" r="13.4" fill="#80d658"/>
<text x="137.2" y="403.1" font-size="11.4" fill="#2c3a2c" text-anchor="middle">3</text>
</svg>
    </div>
<div class="zoompill" style="left:15.5px;top:14.5px"></div>
<svg class="ic" style="left:23.2px;top:23.8px" width="12" height="12" viewBox="0 0 12 12"><path d="M6 .7v10.6M.7 6h10.6" stroke="#3c3c3c" stroke-width="1.5" fill="none"/></svg>
<svg class="ic" style="left:23.2px;top:50.6px" width="12" height="12" viewBox="0 0 12 12"><path d="M.7 6h10.6" stroke="#3c3c3c" stroke-width="1.5" fill="none"/></svg>
<div class="layersbtn" style="left:15.5px;top:77.5px"></div>
<svg class="ic" style="left:21.25px;top:83.05px;color:#444" width="15.5" height="15.5" viewBox="0 0 24 24" fill="#444"><path d="M12 2.6L21.6 8.6 12 14.6 2.4 8.6z"/><path d="M3.4 12.2L12 17.6l8.6-5.4M3.4 15.9L12 21.3l8.6-5.4" fill="none" stroke="currentColor" stroke-width="1.7"/></svg>
<svg class="ic" style="left:952px;top:18px;color:#6a6a6a" width="17" height="17" viewBox="0 0 24 24" fill="#6a6a6a"><path d="M7 14H5v5h5v-2H7v-3zm-2-4h2V7h3V5H5v5zm12 7h-3v2h5v-5h-2v3zM14 5v2h3v3h2V5h-5z"/></svg>
<div class="abs med" style="left:13.7px;top:741.3px;font-size:15.2px;color:#1f1f1f;letter-spacing:0.1px;transform:translateY(-50%)"><span id="t0" style="letter-spacing:-0.071px">Filter alarms</span></div>
<svg class="ic" style="left:100px;top:731.5px;color:#3a3a3a" width="20" height="20" viewBox="0 0 24 24" fill="#3a3a3a"><path d="M16.59 8.59L12 13.17 7.41 8.59 6 10l6 6 6-6z"/></svg>
<div class="abs" style="left:812.9px;top:741.8px;font-size:12.6px;font-weight:bold;color:#5a61e6;letter-spacing:0.45px;transform:translateY(-50%)"><span id="t1" style="letter-spacing:-0.001px">Disable all</span></div>
<div class="abs" style="left:886.8px;top:725.3px;width:86.4px;height:32.3px;border:1px solid #dedede;border-radius:4.5px"></div>
<div class="abs" style="left:901px;top:741.8px;font-size:12.6px;font-weight:bold;color:#5a61e6;letter-spacing:0.45px;transform:translateY(-50%)"><span id="t2" style="letter-spacing:-0.122px">Enable all</span></div>
<div class="fbox" style="left:11.8px;top:776px;width:477.7px">
<div class="frow" style="top:3.6px">
<svg class="ic" style="left:7.65px;top:13.65px;color:#1c1c1c" width="19.5" height="19.5" viewBox="0 0 24 24" fill="#1c1c1c"><path d="M9 16.17L4.83 12l-1.42 1.41L9 19 21 7l-1.41-1.41z" stroke="currentColor" stroke-width="0.8"/></svg>
<span class="lbl"><span id="t3" style="letter-spacing:-0.006px">No alarms</span></span><span class="toggle"><i></i></span>
</div>
<div class="frow" style="top:50.4px">
<svg class="ic" style="left:6.5px;top:11.4px;color:#1c1c1c" width="24" height="24" viewBox="0 0 24 24" fill="#1c1c1c"><path d="M4.6 4.1V19H14.1V4.1" fill="none" stroke="currentColor" stroke-width="2.1"/><path d="M9.35 9.4c1.7 2.2 2.9 3.6 2.9 5.1a2.9 2.9 0 0 1-5.8 0c0-1.5 1.2-2.9 2.9-5.1z"/><path d="M18.2 8h2.4v5.7h-2.4zM18.2 14.7h2.4v2.3h-2.4z"/></svg>
<span class="lbl"><span id="t4" style="letter-spacing:-0.024px">Low remaning level</span></span><span class="toggle"><i></i></span>
</div>
<div class="frow" style="top:97.2px">
<svg class="ic" style="left:5.8px;top:11.4px;color:#1c1c1c" width="24" height="24" viewBox="0 0 24 24" fill="#1c1c1c"><path d="M5.9 3.1h5v2.4h-5z"/><rect x="3.95" y="6.4" width="8.9" height="13.6" rx="1.1" fill="none" stroke="currentColor" stroke-width="2.1"/><path d="M5.9 14h5v3h-5z"/><path d="M19.6 4.4l-4.4 8.3h2.7l-1 6.5 4.4-8.6h-2.8l1.1-6.2z"/></svg>
<span class="lbl"><span id="t5" style="letter-spacing:0.09px">Low battery</span></span><span class="toggle"><i></i></span>
</div>
</div>
<div class="fbox" style="left:500.1px;top:776px;width:477.2px">
<div class="frow" style="top:3.6px">
<svg class="ic" style="left:5.7px;top:11.4px;color:#1c1c1c" width="24" height="24" viewBox="0 0 24 24" fill="#1c1c1c"><circle cx="10" cy="16" r="4.6"/><path d="M7.3 6.2a2.7 2.7 0 0 1 5.4 0V16H7.3z"/><path d="M10 6.2V11.5" stroke="#f4f4f4" stroke-width="1.4" stroke-linecap="round" fill="none"/><path d="M16 7.6h2.5v5.4h-2.5zM16 14.6h2.5v2.5h-2.5z"/></svg>
<span class="lbl"><span id="t6" style="letter-spacing:0.024px">Low temperature</span></span><span class="toggle"><i></i></span>
</div>
<div class="frow" style="top:50.4px">
<svg class="ic" style="left:5.7px;top:11.4px;color:#1c1c1c" width="24" height="24" viewBox="0 0 24 24" fill="#1c1c1c"><circle cx="10" cy="16" r="4.6"/><path d="M7.3 6.2a2.7 2.7 0 0 1 5.4 0V16H7.3z"/><path d="M10 6.2V8.2" stroke="#f4f4f4" stroke-width="1.4" stroke-linecap="round" fill="none"/><path d="M16 7.6h2.5v5.4h-2.5zM16 14.6h2.5v2.5h-2.5z"/></svg>
<span class="lbl"><span id="t7" style="letter-spacing:0.036px">High temperature</span></span><span class="toggle"><i></i></span>
</div>
<div class="frow" style="top:97.2px">
<svg class="ic" style="left:5.2px;top:11.4px;color:#1c1c1c" width="24" height="24" viewBox="0 0 24 24" fill="#1c1c1c"><path d="M10.6 4h2.8l-.5 11.4h-1.8z"/><circle cx="12" cy="18.6" r="1.75"/><path fill="none" stroke="currentColor" stroke-width="2.3" d="M1.89 9.72A13.2 13.2 0 0 1 9.03 5.34M14.97 5.34A13.2 13.2 0 0 1 22.11 9.72M4.95 12.29A9.2 9.2 0 0 1 9.00 9.50M15.00 9.50A9.2 9.2 0 0 1 19.05 12.29M8.02 14.86A5.2 5.2 0 0 1 9.09 13.89M14.91 13.89A5.2 5.2 0 0 1 15.98 14.86"/></svg>
<span class="lbl"><span id="t8" style="letter-spacing:0.193px">Offline</span></span><span class="toggle"><i></i></span>
</div>
</div>
  </div>
<div class="card" id="tanks" style="left:1026.8px;top:24px;width:765.1px;height:468.7px">
<div class="abs med" style="left:21.4px;top:26px;font-size:15px;color:#2e323d;transform:translateY(-50%)"><span id="t9" style="display:inline-block;transform:scaleX(0.9794);transform-origin:0 50%;letter-spacing:-0.25px">Tanks</span></div>
<svg class="ic" style="left:647.35px;top:16.95px;color:#9c9c9c" width="18.5" height="18.5" viewBox="0 0 24 24" fill="#9c9c9c"><path d="M19 13h-6v6h-2v-6H5v-2h6V5h2v6h6v2z"/></svg>
<svg class="ic" style="left:676.15px;top:16.95px;color:#9c9c9c" width="18.5" height="18.5" viewBox="0 0 24 24" fill="#9c9c9c"><path d="M15.5 14h-.79l-.28-.27C15.41 12.59 16 11.11 16 9.5 16 5.91 13.09 3 9.5 3S3 5.91 3 9.5 5.91 16 9.5 16c1.61 0 3.09-.59 4.23-1.57l.27.28v.79l5 4.99L20.49 19l-4.99-5zm-6 0C7.01 14 5 11.99 5 9.5S7.01 5 9.5 5 14 7.01 14 9.5 11.99 14 9.5 14z"/></svg>
<svg class="ic" style="left:705.15px;top:16.95px;color:#9c9c9c" width="18.5" height="18.5" viewBox="0 0 24 24" fill="#9c9c9c"><path fill-rule="evenodd" d="M6 2h8l6 6v12c0 1.1-.9 2-2 2H6c-1.1 0-2-.9-2-2V4c0-1.1.9-2 2-2zm7 1.5V9h5.5L13 3.5zM9 11.2h6.6v6.6l-2.3-2.3-3.4 3.4-2-2 3.4-3.4L9 11.2z"/></svg>
<svg class="ic" style="left:734.05px;top:16.95px;color:#9c9c9c" width="18.5" height="18.5" viewBox="0 0 24 24" fill="#9c9c9c"><path d="M7 14H5v5h5v-2H7v-3zm-2-4h2V7h3V5H5v5zm12 7h-3v2h5v-5h-2v3zM14 5v2h3v3h2V5h-5z"/></svg>
<div class="th" style="left:18.7px;top:67px;transform:translateY(-50%)"><span id="t10" style="letter-spacing:-0.25px">Tank</span></div>
<div class="th" style="left:88.7px;top:67px;transform:translateY(-50%)"><span id="t11" style="letter-spacing:-0.38px">Remaining, %</span></div>
<div class="th" style="left:349.4px;top:67px;transform:translateY(-50%)"><span id="t12" style="letter-spacing:0.023px">Temperature</span></div>
<div class="th" style="left:458.8px;top:67px;transform:translateY(-50%)"><span id="t13" style="letter-spacing:-0.043px">Battery</span></div>
<div class="th" style="left:534px;top:67px;transform:translateY(-50%)"><span id="t14" style="letter-spacing:-0.062px">Connection</span></div>
<div class="abs" style="left:7.9px;top:92px;width:744.5px;height:1px;background:#dcdcdc"></div>
<div class="abs" style="left:752.3px;top:42px;width:5.3px;height:372.3px;background:#d3d3d3"></div>
<div class="td" style="left:18.6px;top:116.2px;line-height:17.7px"><span id="t15" style="letter-spacing:-0.356px">Tank</span><br><span id="t16" style="letter-spacing:-0.023px">1133</span></div>
<div class="td red med" style="left:92.5px;top:116.2px"><span id="t17" style="letter-spacing:-0.385px">8% (13497L)</span></div>
<div class="bar r" style="left:225px;top:109.5px"><i style="width:8%"></i></div>
<div class="td" style="left:349.7px;top:116.2px"><span id="t18" style="display:inline-block;transform:scaleX(0.9143);transform-origin:0 50%;letter-spacing:-0.25px">6°C</span></div>
<div class="td" style="left:458.8px;top:116.2px"><span id="t19" style="display:inline-block;transform:scaleX(0.9048);transform-origin:0 50%;letter-spacing:-0.25px">23%</span></div>
<div class="badge" style="left:534.3px;top:104.2px"><span id="t20" style="letter-spacing:-0.176px">Online</span></div>
<svg class="ic" style="left:665.4px;top:105.2px;color:#9c9c9c" width="22" height="22" viewBox="0 0 24 24" fill="#9c9c9c"><path d="M3 17.25V21h3.75L17.81 9.94l-3.75-3.75L3 17.25zM20.71 7.04c.39-.39.39-1.02 0-1.41l-2.34-2.34c-.39-.39-1.02-.39-1.41 0l-1.83 1.83 3.75 3.75 1.83-1.83z"/></svg>
<svg class="ic" style="left:708.6px;top:105px;color:#9c9c9c" width="22" height="22" viewBox="0 0 24 24" fill="#9c9c9c"><path d="M6 19c0 1.1.9 2 2 2h8c1.1 0 2-.9 2-2V7H6v12zM19 4h-3.5l-1-1h-5l-1 1H5v2h14V4z"/></svg>
<div class="td" style="left:18.6px;top:163.05px;line-height:17.7px"><span id="t21" style="letter-spacing:-0.356px">Tank</span><br><span id="t22" style="letter-spacing:0.067px">1113</span></div>
<div class="td" style="left:92.5px;top:163.05px"><span id="t23" style="letter-spacing:-0.409px">27% (251726L)</span></div>
<div class="bar" style="left:225px;top:156.35px"><i style="width:27.5%"></i></div>
<div class="td" style="left:349.7px;top:163.05px"><span id="t24" style="display:inline-block;transform:scaleX(0.9143);transform-origin:0 50%;letter-spacing:-0.25px">9°C</span></div>
<div class="td red med" style="left:458.8px;top:163.05px"><span id="t25" style="display:inline-block;transform:scaleX(0.9242);transform-origin:0 50%;letter-spacing:-0.25px">11%</span></div>
<div class="badge" style="left:534.3px;top:151.05px"><span id="t26" style="letter-spacing:-0.176px">Online</span></div>
<svg class="ic" style="left:665.4px;top:152.05px;color:#9c9c9c" width="22" height="22" viewBox="0 0 24 24" fill="#9c9c9c"><path d="M3 17.25V21h3.75L17.81 9.94l-3.75-3.75L3 17.25zM20.71 7.04c.39-.39.39-1.02 0-1.41l-2.34-2.34c-.39-.39-1.02-.39-1.41 0l-1.83 1.83 3.75 3.75 1.83-1.83z"/></svg>
<svg class="ic" style="left:708.6px;top:151.85px;color:#9c9c9c" width="22" height="22" viewBox="0 0 24 24" fill="#9c9c9c"><path d="M6 19c0 1.1.9 2 2 2h8c1.1 0 2-.9 2-2V7H6v12zM19 4h-3.5l-1-1h-5l-1 1H5v2h14V4z"/></svg>
<div class="td" style="left:18.6px;top:209.9px;line-height:17.7px"><span id="t27" style="letter-spacing:-0.356px">Tank</span><br><span id="t28" style="letter-spacing:-0.241px">1289</span></div>
<div class="td" style="left:92.5px;top:209.9px"><span id="t29" style="letter-spacing:-0.361px">72% (36778gal)</span></div>
<div class="bar" style="left:225px;top:203.2px"><i style="width:73%"></i></div>
<div class="td" style="left:349.7px;top:209.9px"><span id="t30" style="display:inline-block;transform:scaleX(0.9471);transform-origin:0 50%;letter-spacing:-0.25px">34°C</span></div>
<div class="td" style="left:458.8px;top:209.9px"><span id="t31" style="display:inline-block;transform:scaleX(0.9048);transform-origin:0 50%;letter-spacing:-0.25px">52%</span></div>
<div class="badge" style="left:534.3px;top:197.9px"><span id="t32" style="letter-spacing:-0.176px">Online</span></div>
<svg class="ic" style="left:665.4px;top:198.9px;color:#9c9c9c" width="22" height="22" viewBox="0 0 24 24" fill="#9c9c9c"><path d="M3 17.25V21h3.75L17.81 9.94l-3.75-3.75L3 17.25zM20.71 7.04c.39-.39.39-1.02 0-1.41l-2.34-2.34c-.39-.39-1.02-.39-1.41 0l-1.83 1.83 3.75 3.75 1.83-1.83z"/></svg>
<svg class="ic" style="left:708.6px;top:198.7px;color:#9c9c9c" width="22" height="22" viewBox="0 0 24 24" fill="#9c9c9c"><path d="M6 19c0 1.1.9 2 2 2h8c1.1 0 2-.9 2-2V7H6v12zM19 4h-3.5l-1-1h-5l-1 1H5v2h14V4z"/></svg>
<div class="td" style="left:18.6px;top:256.75px;line-height:17.7px"><span id="t33" style="letter-spacing:-0.356px">Tank</span><br><span id="t34" style="letter-spacing:-0.241px">1288</span></div>
<div class="td" style="left:92.5px;top:256.75px"><span id="t35" style="display:inline-block;transform:scaleX(0.9731);transform-origin:0 50%;letter-spacing:-0.25px">85% (27947L)</span></div>
<div class="bar" style="left:225px;top:250.05px"><i style="width:85.5%"></i></div>
<div class="td red med" style="left:349.7px;top:256.75px"><span id="t36" style="display:inline-block;transform:scaleX(0.9542);transform-origin:0 50%;letter-spacing:-0.25px">82°C</span></div>
<div class="td" style="left:458.8px;top:256.75px"><span id="t37" style="display:inline-block;transform:scaleX(0.9048);transform-origin:0 50%;letter-spacing:-0.25px">50%</span></div>
<div class="badge" style="left:534.3px;top:244.75px"><span id="t38" style="letter-spacing:-0.176px">Online</span></div>
<svg class="ic" style="left:665.4px;top:245.75px;color:#9c9c9c" width="22" height="22" viewBox="0 0 24 24" fill="#9c9c9c"><path d="M3 17.25V21h3.75L17.81 9.94l-3.75-3.75L3 17.25zM20.71 7.04c.39-.39.39-1.02 0-1.41l-2.34-2.34c-.39-.39-1.02-.39-1.41 0l-1.83 1.83 3.75 3.75 1.83-1.83z"/></svg>
<svg class="ic" style="left:708.6px;top:245.55px;color:#9c9c9c" width="22" height="22" viewBox="0 0 24 24" fill="#9c9c9c"><path d="M6 19c0 1.1.9 2 2 2h8c1.1 0 2-.9 2-2V7H6v12zM19 4h-3.5l-1-1h-5l-1 1H5v2h14V4z"/></svg>
<div class="td" style="left:18.6px;top:303.6px;line-height:17.7px"><span id="t39" style="letter-spacing:-0.356px">Tank</span><br><span id="t40" style="letter-spacing:-0.241px">1290</span></div>
<div class="td" style="left:92.5px;top:303.6px"><span id="t41" style="letter-spacing:-0.247px">53% (112599gal)</span></div>
<div class="bar" style="left:225px;top:296.9px"><i style="width:53.5%"></i></div>
<div class="td" style="left:349.7px;top:303.6px"><span id="t42" style="display:inline-block;transform:scaleX(0.9143);transform-origin:0 50%;letter-spacing:-0.25px">7°C</span></div>
<div class="td" style="left:458.8px;top:303.6px"><span id="t43" style="display:inline-block;transform:scaleX(0.9048);transform-origin:0 50%;letter-spacing:-0.25px">36%</span></div>
<div class="badge" style="left:534.3px;top:291.6px"><span id="t44" style="letter-spacing:-0.176px">Online</span></div>
<svg class="ic" style="left:665.4px;top:292.6px;color:#9c9c9c" width="22" height="22" viewBox="0 0 24 24" fill="#9c9c9c"><path d="M3 17.25V21h3.75L17.81 9.94l-3.75-3.75L3 17.25zM20.71 7.04c.39-.39.39-1.02 0-1.41l-2.34-2.34c-.39-.39-1.02-.39-1.41 0l-1.83 1.83 3.75 3.75 1.83-1.83z"/></svg>
<svg class="ic" style="left:708.6px;top:292.4px;color:#9c9c9c" width="22" height="22" viewBox="0 0 24 24" fill="#9c9c9c"><path d="M6 19c0 1.1.9 2 2 2h8c1.1 0 2-.9 2-2V7H6v12zM19 4h-3.5l-1-1h-5l-1 1H5v2h14V4z"/></svg>
<div class="td" style="left:18.6px;top:350.45px;line-height:17.7px"><span id="t45" style="letter-spacing:-0.356px">Tank</span><br><span id="t46" style="letter-spacing:0.067px">1114</span></div>
<div class="td" style="left:92.5px;top:350.45px"><span id="t47" style="display:inline-block;transform:scaleX(0.9731);transform-origin:0 50%;letter-spacing:-0.25px">67% (45523L)</span></div>
<div class="bar" style="left:225px;top:343.75px"><i style="width:67%"></i></div>
<div class="td" style="left:349.7px;top:350.45px"><span id="t48" style="display:inline-block;transform:scaleX(0.9471);transform-origin:0 50%;letter-spacing:-0.25px">36°C</span></div>
<div class="td" style="left:458.8px;top:350.45px"><span id="t49" style="display:inline-block;transform:scaleX(0.9048);transform-origin:0 50%;letter-spacing:-0.25px">66%</span></div>
<div class="badge" style="left:534.3px;top:338.45px"><span id="t50" style="letter-spacing:-0.176px">Online</span></div>
<svg class="ic" style="left:665.4px;top:339.45px;color:#9c9c9c" width="22" height="22" viewBox="0 0 24 24" fill="#9c9c9c"><path d="M3 17.25V21h3.75L17.81 9.94l-3.75-3.75L3 17.25zM20.71 7.04c.39-.39.39-1.02 0-1.41l-2.34-2.34c-.39-.39-1.02-.39-1.41 0l-1.83 1.83 3.75 3.75 1.83-1.83z"/></svg>
<svg class="ic" style="left:708.6px;top:339.25px;color:#9c9c9c" width="22" height="22" viewBox="0 0 24 24" fill="#9c9c9c"><path d="M6 19c0 1.1.9 2 2 2h8c1.1 0 2-.9 2-2V7H6v12zM19 4h-3.5l-1-1h-5l-1 1H5v2h14V4z"/></svg>
<div class="td" style="left:18.6px;top:397.3px;line-height:17.7px"><span id="t51" style="letter-spacing:-0.356px">Tank</span><br><span id="t52" style="letter-spacing:-0.241px">1291</span></div>
<div class="td" style="left:92.5px;top:397.3px"><span id="t53" style="letter-spacing:-0.389px">96% (3929gal)</span></div>
<div class="bar" style="left:225px;top:390.6px"><i style="width:96%"></i></div>
<div class="td" style="left:349.7px;top:397.3px"><span id="t54" style="display:inline-block;transform:scaleX(0.9471);transform-origin:0 50%;letter-spacing:-0.25px">38°C</span></div>
<div class="td" style="left:458.8px;top:397.3px"><span id="t55" style="display:inline-block;transform:scaleX(0.9048);transform-origin:0 50%;letter-spacing:-0.25px">71%</span></div>
<div class="badge" style="left:534.3px;top:385.3px"><span id="t56" style="letter-spacing:-0.176px">Online</span></div>
<svg class="ic" style="left:665.4px;top:386.3px;color:#9c9c9c" width="22" height="22" viewBox="0 0 24 24" fill="#9c9c9c"><path d="M3 17.25V21h3.75L17.81 9.94l-3.75-3.75L3 17.25zM20.71 7.04c.39-.39.39-1.02 0-1.41l-2.34-2.34c-.39-.39-1.02-.39-1.41 0l-1.83 1.83 3.75 3.75 1.83-1.83z"/></svg>
<svg class="ic" style="left:708.6px;top:386.1px;color:#9c9c9c" width="22" height="22" viewBox="0 0 24 24" fill="#9c9c9c"><path d="M6 19c0 1.1.9 2 2 2h8c1.1 0 2-.9 2-2V7H6v12zM19 4h-3.5l-1-1h-5l-1 1H5v2h14V4z"/></svg>
<div class="td" style="left:18.6px;top:444.15px;line-height:17.7px"><span id="t57" style="letter-spacing:-0.356px">Tank</span><br><span id="t58" style="letter-spacing:0.067px">1115</span></div>
<div class="td" style="left:92.5px;top:444.15px"><span id="t59" style="display:inline-block;transform:scaleX(0.9731);transform-origin:0 50%;letter-spacing:-0.25px">72% (20797L)</span></div>
<div class="bar" style="left:225px;top:437.45px"><i style="width:73%"></i></div>
<div class="td" style="left:349.7px;top:444.15px"><span id="t60" style="display:inline-block;transform:scaleX(0.9471);transform-origin:0 50%;letter-spacing:-0.25px">21°C</span></div>
<div class="td" style="left:458.8px;top:444.15px"><span id="t61" style="display:inline-block;transform:scaleX(0.9048);transform-origin:0 50%;letter-spacing:-0.25px">89%</span></div>
<div class="badge" style="left:534.3px;top:432.15px"><span id="t62" style="letter-spacing:-0.176px">Online</span></div>
<svg class="ic" style="left:665.4px;top:433.15px;color:#9c9c9c" width="22" height="22" viewBox="0 0 24 24" fill="#9c9c9c"><path d="M3 17.25V21h3.75L17.81 9.94l-3.75-3.75L3 17.25zM20.71 7.04c.39-.39.39-1.02 0-1.41l-2.34-2.34c-.39-.39-1.02-.39-1.41 0l-1.83 1.83 3.75 3.75 1.83-1.83z"/></svg>
<svg class="ic" style="left:708.6px;top:432.95px;color:#9c9c9c" width="22" height="22" viewBox="0 0 24 24" fill="#9c9c9c"><path d="M6 19c0 1.1.9 2 2 2h8c1.1 0 2-.9 2-2V7H6v12zM19 4h-3.5l-1-1h-5l-1 1H5v2h14V4z"/></svg>
</div>
<div class="card" id="alarms" style="left:1026.8px;top:506.4px;width:765.1px;height:442.6px">
<div class="abs med" style="left:21.4px;top:26.3px;font-size:15px;color:#2e323d;transform:translateY(-50%)"><span id="t63" style="letter-spacing:-0.234px">Alarms</span></div>
<svg class="ic" style="left:618.55px;top:17.95px;color:#9c9c9c" width="18.5" height="18.5" viewBox="0 0 24 24" fill="#9c9c9c"><path d="M19.14 12.94c.04-.3.06-.61.06-.94 0-.32-.02-.64-.07-.94l2.03-1.58c.18-.14.23-.41.12-.61l-1.92-3.32c-.12-.22-.37-.29-.59-.22l-2.39.96c-.5-.38-1.03-.7-1.62-.94l-.36-2.54c-.04-.24-.24-.41-.48-.41h-3.84c-.24 0-.43.17-.47.41l-.36 2.54c-.59.24-1.13.57-1.62.94l-2.39-.96c-.22-.08-.47 0-.59.22L2.74 8.87c-.12.21-.08.47.12.61l2.03 1.58c-.05.3-.09.63-.09.94s.02.64.07.94l-2.03 1.58c-.18.14-.23.41-.12.61l1.92 3.32c.12.22.37.29.59.22l2.39-.96c.5.38 1.03.7 1.62.94l.36 2.54c.05.24.24.41.48.41h3.84c.24 0 .44-.17.47-.41l.36-2.54c.59-.24 1.13-.56 1.62-.94l2.39.96c.22.08.47 0 .59-.22l1.92-3.32c.12-.22.07-.47-.12-.61l-2.01-1.58zM12 15.6c-1.98 0-3.6-1.62-3.6-3.6s1.62-3.6 3.6-3.6 3.6 1.62 3.6 3.6-1.62 3.6-3.6 3.6z"/></svg>
<svg class="ic" style="left:647.15px;top:17.95px;color:#9c9c9c" width="18.5" height="18.5" viewBox="0 0 24 24" fill="#9c9c9c"><path d="M15.5 14h-.79l-.28-.27C15.41 12.59 16 11.11 16 9.5 16 5.91 13.09 3 9.5 3S3 5.91 3 9.5 5.91 16 9.5 16c1.61 0 3.09-.59 4.23-1.57l.27.28v.79l5 4.99L20.49 19l-4.99-5zm-6 0C7.01 14 5 11.99 5 9.5S7.01 5 9.5 5 14 7.01 14 9.5 11.99 14 9.5 14z"/></svg>
<svg class="ic" style="left:676.05px;top:17.95px;color:#9c9c9c" width="18.5" height="18.5" viewBox="0 0 24 24" fill="#9c9c9c"><path d="M10 18h4v-2h-4v2zM3 6v2h18V6H3zm3 7h12v-2H6v2z"/></svg>
<svg class="ic" style="left:705.15px;top:17.95px;color:#9c9c9c" width="18.5" height="18.5" viewBox="0 0 24 24" fill="#9c9c9c"><path fill-rule="evenodd" d="M6 2h8l6 6v12c0 1.1-.9 2-2 2H6c-1.1 0-2-.9-2-2V4c0-1.1.9-2 2-2zm7 1.5V9h5.5L13 3.5zM9 11.2h6.6v6.6l-2.3-2.3-3.4 3.4-2-2 3.4-3.4L9 11.2z"/></svg>
<svg class="ic" style="left:734.05px;top:17.95px;color:#9c9c9c" width="18.5" height="18.5" viewBox="0 0 24 24" fill="#9c9c9c"><path d="M7 14H5v5h5v-2H7v-3zm-2-4h2V7h3V5H5v5zm12 7h-3v2h5v-5h-2v3zM14 5v2h3v3h2V5h-5z"/></svg>
<div class="th" style="left:18.7px;top:68.2px;transform:translateY(-50%)"><span id="t64" style="letter-spacing:-0.25px">Tank</span></div>
<div class="th" style="left:101.8px;top:68.2px;transform:translateY(-50%)"><span id="t65" style="letter-spacing:-0.089px">Created time</span></div>
<div class="th" style="left:278px;top:68.2px;transform:translateY(-50%)"><span id="t66" style="letter-spacing:-0.32px">Type</span></div>
<div class="th" style="left:465.2px;top:68.2px;transform:translateY(-50%)"><span id="t67" style="letter-spacing:-0.087px">Details</span></div>
<svg class="ic" style="left:169px;top:61.6px;color:#4d4d4d" width="14" height="14" viewBox="0 0 24 24" fill="#4d4d4d"><path d="M20 12l-1.41-1.41L13 16.17V4h-2v12.17l-5.58-5.59L4 12l8 8 8-8z" stroke="currentColor" stroke-width="0.9"/></svg>
<div class="abs" style="left:7.6px;top:93.1px;width:750px;height:47.4px;background:#e8e8e8"></div>
<div class="td" style="left:18.6px;top:117.1px"><span id="t68" style="letter-spacing:-0.008px">Tank 1113</span></div>
<div class="td" style="left:103.1px;top:117.1px"><span id="t69" style="letter-spacing:-0.351px">2025-06-23 16:21:41</span></div>
<div class="td" style="left:278px;top:117.1px"><span id="t70" style="letter-spacing:-0.321px">Low Battery Level</span></div>
<div class="td red med" style="left:465.2px;top:117.1px"><span id="t71" style="display:inline-block;transform:scaleX(0.9242);transform-origin:0 50%;letter-spacing:-0.25px">11%</span></div>
<svg class="ic" style="left:627.7px;top:106.4px;color:#9c9c9c" width="22" height="22" viewBox="0 0 24 24" fill="#9c9c9c"><path d="M21.99 4c0-1.1-.89-2-1.99-2H4c-1.1 0-2 .9-2 2v12c0 1.1.9 2 2 2h14l4 4-.01-18zM18 14H6v-2h12v2zm0-3H6V9h12v2zm0-3H6V6h12v2z"/></svg>
<svg class="ic" style="left:671px;top:106.6px;color:#9c9c9c" width="22" height="22" viewBox="0 0 24 24" fill="#9c9c9c"><path d="M6 10c-1.1 0-2 .9-2 2s.9 2 2 2 2-.9 2-2-.9-2-2-2zm12 0c-1.1 0-2 .9-2 2s.9 2 2 2 2-.9 2-2-.9-2-2-2zm-6 0c-1.1 0-2 .9-2 2s.9 2 2 2 2-.9 2-2-.9-2-2-2z"/></svg>
<svg class="ic" style="left:714.2px;top:106.6px;color:#6e6e6e" width="22" height="22" viewBox="0 0 24 24" fill="#6e6e6e"><path d="M5.5 5.5l13 13M18.5 5.5l-13 13" stroke="currentColor" stroke-width="1.5" fill="none"/></svg>
<div class="td" style="left:18.6px;top:164px"><span id="t72" style="letter-spacing:-0.054px">Tank 1133</span></div>
<div class="td" style="left:103.1px;top:164px"><span id="t73" style="letter-spacing:-0.318px">2025-06-23 16:21:40</span></div>
<div class="td" style="left:278px;top:164px"><span id="t74" style="letter-spacing:-0.419px">Low Fuel Level</span></div>
<div class="td red med" style="left:465.2px;top:164px"><span id="t75" style="display:inline-block;transform:scaleX(0.9477);transform-origin:0 50%;letter-spacing:-0.25px">8.18%</span></div>
<svg class="ic" style="left:627.7px;top:153.3px;color:#9c9c9c" width="22" height="22" viewBox="0 0 24 24" fill="#9c9c9c"><path d="M21.99 4c0-1.1-.89-2-1.99-2H4c-1.1 0-2 .9-2 2v12c0 1.1.9 2 2 2h14l4 4-.01-18zM18 14H6v-2h12v2zm0-3H6V9h12v2zm0-3H6V6h12v2z"/></svg>
<svg class="ic" style="left:671px;top:153.5px;color:#9c9c9c" width="22" height="22" viewBox="0 0 24 24" fill="#9c9c9c"><path d="M6 10c-1.1 0-2 .9-2 2s.9 2 2 2 2-.9 2-2-.9-2-2-2zm12 0c-1.1 0-2 .9-2 2s.9 2 2 2 2-.9 2-2-.9-2-2-2zm-6 0c-1.1 0-2 .9-2 2s.9 2 2 2 2-.9 2-2-.9-2-2-2z"/></svg>
<svg class="ic" style="left:714.2px;top:153.5px;color:#6e6e6e" width="22" height="22" viewBox="0 0 24 24" fill="#6e6e6e"><path d="M5.5 5.5l13 13M18.5 5.5l-13 13" stroke="currentColor" stroke-width="1.5" fill="none"/></svg>
<div class="td" style="left:18.6px;top:210.9px"><span id="t76" style="letter-spacing:-0.175px">Tank 1288</span></div>
<div class="td" style="left:103.1px;top:210.9px"><span id="t77" style="letter-spacing:-0.318px">2025-06-23 16:21:39</span></div>
<div class="td" style="left:278px;top:210.9px"><span id="t78" style="letter-spacing:-0.206px">High Temperature</span></div>
<div class="td red med" style="left:465.2px;top:210.9px"><span id="t79" style="letter-spacing:-0.378px">82.4°C</span></div>
<svg class="ic" style="left:627.7px;top:200.2px;color:#9c9c9c" width="22" height="22" viewBox="0 0 24 24" fill="#9c9c9c"><path d="M21.99 4c0-1.1-.89-2-1.99-2H4c-1.1 0-2 .9-2 2v12c0 1.1.9 2 2 2h14l4 4-.01-18zM18 14H6v-2h12v2zm0-3H6V9h12v2zm0-3H6V6h12v2z"/></svg>
<svg class="ic" style="left:671px;top:200.4px;color:#9c9c9c" width="22" height="22" viewBox="0 0 24 24" fill="#9c9c9c"><path d="M6 10c-1.1 0-2 .9-2 2s.9 2 2 2 2-.9 2-2-.9-2-2-2zm12 0c-1.1 0-2 .9-2 2s.9 2 2 2 2-.9 2-2-.9-2-2-2zm-6 0c-1.1 0-2 .9-2 2s.9 2 2 2 2-.9 2-2-.9-2-2-2z"/></svg>
<svg class="ic" style="left:714.2px;top:200.4px;color:#6e6e6e" width="22" height="22" viewBox="0 0 24 24" fill="#6e6e6e"><path d="M5.5 5.5l13 13M18.5 5.5l-13 13" stroke="currentColor" stroke-width="1.5" fill="none"/></svg>
</div>
  <div id="backdrop"></div>
<div id="modal">
<div class="abs med" style="left:14.7px;top:29.4px;font-size:18.6px;color:#1d1d1d;transform:translateY(-50%)"><span id="t80" style="letter-spacing:0.014px">Edit sensor 001133</span></div>
<svg class="ic" style="left:694.7px;top:21.8px" width="14" height="14" viewBox="0 0 14 14"><path d="M1.3 1.3l11.4 11.4M12.7 1.3L1.3 12.7" stroke="#1c1c1c" stroke-width="1.7" fill="none"/></svg>
<div class="abs" style="left:0;top:57.5px;width:730.5px;height:1px;background:#e0e0e0"></div>
<div class="stepc" style="left:21.3px;top:83.4px;background:#00695c">1</div>
<div class="abs" style="left:50.7px;top:93.9px;font-size:15px;color:#212121;transform:translateY(-50%)"><span id="t81" style="letter-spacing:-0.024px">General Info</span></div>
<div class="stepl" style="left:141.5px;top:94.2px;width:179px"></div>
<div class="stepc" style="left:328px;top:83.4px;background:#757575">2</div>
<div class="abs" style="left:357.2px;top:93.7px;font-size:13.4px;color:#7b7b7b;transform:translateY(-50%)"><span id="t82" style="letter-spacing:0.249px">Tank info</span></div>
<div class="stepl" style="left:420.1px;top:94.2px;width:180.7px"></div>
<div class="stepc" style="left:607.5px;top:83.4px;background:#757575">3</div>
<div class="abs" style="left:637.3px;top:93.7px;font-size:13.4px;color:#7b7b7b;transform:translateY(-50%)"><span id="t83" style="letter-spacing:0.101px">Set location</span></div>
<div class="abs med" style="left:21.7px;top:170px;font-size:13.4px;line-height:21.2px;color:#3b3b3b"><span id="t84" style="letter-spacing:-0.29px">General</span><br><span id="t85" style="letter-spacing:-0.048px">Info</span></div>
<div class="field" style="left:97.6px;top:154.8px"><span class="fl"><span id="t86" style="letter-spacing:0.017px">Serial number*</span></span><span class="fv"><span id="t87" style="letter-spacing:0.329px">001133</span></span></div>
<div class="field" style="left:97.6px;top:224.6px"><span class="fl"><span id="t88" style="letter-spacing:0.016px">Sensor label*</span></span><span class="fv"><span id="t89" style="letter-spacing:0.236px">Tank 1133</span></span></div>
<div class="abs med" style="left:595px;top:311px;font-size:12.6px;color:#00695c;letter-spacing:0.5px;transform:translateY(-50%)"><span id="t90" style="letter-spacing:0.219px">Cancel</span></div>
<div class="abs" style="left:651.5px;top:294.9px;width:57.7px;height:32.3px;border-radius:4px;background:#00695c;box-shadow:0 2px 3px rgba(0,0,0,0.25)"></div>
<div class="abs med" style="left:680.3px;top:311px;font-size:12.6px;color:#fff;letter-spacing:0.5px;transform:translate(-50%,-50%)"><span id="t91" style="letter-spacing:0.365px">Next</span></div>
</div>
</div>
</body>
</html>
